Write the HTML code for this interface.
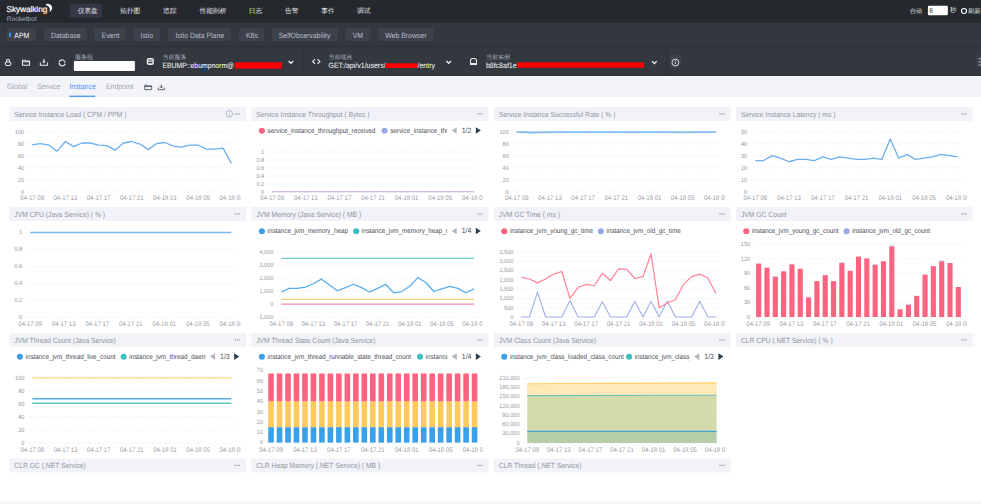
<!DOCTYPE html><html><head><meta charset="utf-8"><style>
html,body{margin:0;padding:0;width:981px;height:504px;overflow:hidden;background:#fff;}
body{font-family:"Liberation Sans", sans-serif;position:relative;}
.a{position:absolute;}
svg{position:absolute;left:0;top:0;}
svg text{font-family:"Liberation Sans", sans-serif;text-rendering:geometricPrecision;}
</style></head><body>
<svg width="981" height="504" viewBox="0 0 981 504">
<rect x="0" y="0" width="981" height="76" fill="#33383f"/>
<rect x="0" y="0" width="981" height="22.7" fill="#25292e"/>
<text x="6.50" y="9.40" font-size="8.3" fill="#ffffff" text-anchor="start" dominant-baseline="central" font-weight="normal" letter-spacing="-0.08" stroke="#fff" stroke-width="0.18">Skywalking</text>
<path d="M45.4 4.9 A4.1 4.1 0 1 1 49.3 11.9 A4.8 4.8 0 0 0 45.4 4.9 Z" fill="#fff"/>
<text x="6.80" y="19.30" font-size="6.6" fill="#a3b1c6" text-anchor="start" dominant-baseline="central" font-weight="normal" >Rocketbot</text>
<rect x="70" y="3.7" width="32" height="14" rx="1.5" fill="#343844"/>
<text x="77.70" y="11.20" font-size="6.7" fill="#e6e8ec" text-anchor="start" dominant-baseline="central" font-weight="normal" >仪表盘</text>
<circle cx="75.00" cy="10.9" r="0.7" fill="#3b3f46"/>
<text x="120.20" y="11.20" font-size="6.7" fill="#e6e8ec" text-anchor="start" dominant-baseline="central" font-weight="normal" >拓扑图</text>
<circle cx="117.50" cy="10.9" r="0.7" fill="#3b3f46"/>
<text x="163.00" y="11.20" font-size="6.7" fill="#e6e8ec" text-anchor="start" dominant-baseline="central" font-weight="normal" >追踪</text>
<circle cx="160.30" cy="10.9" r="0.7" fill="#3b3f46"/>
<text x="199.70" y="11.20" font-size="6.7" fill="#e6e8ec" text-anchor="start" dominant-baseline="central" font-weight="normal" >性能剖析</text>
<circle cx="197.00" cy="10.9" r="0.7" fill="#3b3f46"/>
<text x="248.70" y="11.20" font-size="6.7" fill="#e6e8ec" text-anchor="start" dominant-baseline="central" font-weight="normal" >日志</text>
<circle cx="246.00" cy="10.9" r="0.7" fill="#3b3f46"/>
<text x="285.00" y="11.20" font-size="6.7" fill="#e6e8ec" text-anchor="start" dominant-baseline="central" font-weight="normal" >告警</text>
<circle cx="282.30" cy="10.9" r="0.7" fill="#3b3f46"/>
<text x="321.30" y="11.20" font-size="6.7" fill="#e6e8ec" text-anchor="start" dominant-baseline="central" font-weight="normal" >事件</text>
<circle cx="318.60" cy="10.9" r="0.7" fill="#3b3f46"/>
<text x="357.00" y="11.20" font-size="6.7" fill="#e6e8ec" text-anchor="start" dominant-baseline="central" font-weight="normal" >调试</text>
<circle cx="354.30" cy="10.9" r="0.7" fill="#3b3f46"/>
<text x="910.00" y="11.60" font-size="6.1" fill="#e6e8ec" text-anchor="start" dominant-baseline="central" font-weight="normal" >自动</text>
<rect x="927.9" y="5.8" width="20" height="9.5" rx="1.2" fill="#ffffff"/>
<text transform="translate(929.30 10.60) scale(0.9 1)" font-size="7.556" fill="#333" text-anchor="start" dominant-baseline="central" font-weight="normal" >6</text>
<text x="950.00" y="10.90" font-size="6.4" fill="#e6e8ec" text-anchor="start" dominant-baseline="central" font-weight="normal" >秒</text>
<circle cx="964" cy="11" r="2.5" fill="none" stroke="#fff" stroke-width="1.1"/>
<text x="968.00" y="11.20" font-size="6.4" fill="#e0e3e8" text-anchor="start" dominant-baseline="central" font-weight="normal" >刷新</text>
<rect x="6.9" y="27.7" width="29.10" height="13.3" rx="1.5" fill="#3d414b"/>
<text transform="translate(14.30 35.30) scale(0.9 1)" font-size="7.667" fill="#ffffff" text-anchor="start" dominant-baseline="central" font-weight="normal" >APM</text>
<rect x="44" y="27.7" width="42.80" height="13.3" rx="1.5" fill="#3d414b"/>
<text transform="translate(51.00 35.30) scale(0.9 1)" font-size="7.667" fill="#b8bec8" text-anchor="start" dominant-baseline="central" font-weight="normal" >Database</text>
<rect x="94.4" y="27.7" width="31.20" height="13.3" rx="1.5" fill="#3d414b"/>
<text transform="translate(101.80 35.30) scale(0.9 1)" font-size="7.667" fill="#b8bec8" text-anchor="start" dominant-baseline="central" font-weight="normal" >Event</text>
<rect x="133.3" y="27.7" width="26.70" height="13.3" rx="1.5" fill="#3d414b"/>
<text transform="translate(140.50 35.30) scale(0.9 1)" font-size="7.667" fill="#b8bec8" text-anchor="start" dominant-baseline="central" font-weight="normal" >Istio</text>
<rect x="168" y="27.7" width="62.70" height="13.3" rx="1.5" fill="#3d414b"/>
<text transform="translate(175.40 35.30) scale(0.9 1)" font-size="7.667" fill="#b8bec8" text-anchor="start" dominant-baseline="central" font-weight="normal" >Istio Data Plane</text>
<rect x="239" y="27.7" width="24.90" height="13.3" rx="1.5" fill="#3d414b"/>
<text transform="translate(246.00 35.30) scale(0.9 1)" font-size="7.667" fill="#b8bec8" text-anchor="start" dominant-baseline="central" font-weight="normal" >K8s</text>
<rect x="271.6" y="27.7" width="66.30" height="13.3" rx="1.5" fill="#3d414b"/>
<text transform="translate(278.70 35.30) scale(0.9 1)" font-size="7.667" fill="#b8bec8" text-anchor="start" dominant-baseline="central" font-weight="normal" >SelfObservability</text>
<rect x="345.6" y="27.7" width="24.90" height="13.3" rx="1.5" fill="#3d414b"/>
<text transform="translate(352.70 35.30) scale(0.9 1)" font-size="7.667" fill="#b8bec8" text-anchor="start" dominant-baseline="central" font-weight="normal" >VM</text>
<rect x="378.2" y="27.7" width="55.10" height="13.3" rx="1.5" fill="#3d414b"/>
<text transform="translate(385.20 35.30) scale(0.9 1)" font-size="7.667" fill="#b8bec8" text-anchor="start" dominant-baseline="central" font-weight="normal" >Web Browser</text>
<rect x="9" y="32.6" width="1.9" height="4.6" rx="0.9" fill="#3a8ef6"/>
<rect x="0" y="46" width="981" height="0.8" fill="#2b2e35"/>
<path d="M6.6 62 V60.6 A1.45 1.45 0 0 1 9.5 60.6 V62" fill="none" stroke="#e8eaee" stroke-width="1.05"/>
<rect x="5.35" y="61.9" width="5.5" height="3.5" rx="1.3" fill="none" stroke="#e8eaee" stroke-width="1.05"/>
<rect x="16.3" y="57.2" width="0.8" height="8.9" fill="#2b2e35"/>
<path d="M22.5 60.2 h2.5 l0.9 0.9 h3.6 v4.2 h-7 z" fill="none" stroke="#e8eaee" stroke-width="1.05" stroke-linejoin="round"/>
<path d="M22.5 61.9 h7" stroke="#e8eaee" stroke-width="0.8"/>
<rect x="34.4" y="57.2" width="0.8" height="8.9" fill="#2b2e35"/>
<path d="M43.9 59 v3" fill="none" stroke="#e8eaee" stroke-width="1.1"/>
<path d="M42.1 61.6 h3.6 l-1.8 1.8 z" fill="#e8eaee"/>
<path d="M40.3 62.4 v2.8 h7.2 v-2.8" fill="none" stroke="#e8eaee" stroke-width="1.05"/>
<rect x="52.6" y="57.2" width="0.8" height="8.9" fill="#2b2e35"/>
<circle cx="62.1" cy="62.9" r="3.0" fill="none" stroke="#e8eaee" stroke-width="1.15" stroke-dasharray="8.2 1.22" transform="rotate(-165 62.1 62.9)"/>
<path d="M58.6 61.2 L60.2 60.4 L59.5 62.5 z M65.6 64.6 L64 65.4 L64.7 63.3 z" fill="#e8eaee"/>
<rect x="70.8" y="57.2" width="0.8" height="8.9" fill="#2b2e35"/>
<text x="75.00" y="57.60" font-size="6.0" fill="#a9afbb" text-anchor="start" dominant-baseline="central" font-weight="normal" >服务组</text>
<rect x="73.9" y="61.1" width="61" height="10" rx="1" fill="#ffffff"/>
<rect x="137.1" y="52" width="0.7" height="19.5" fill="#2b2e35"/>
<rect x="146.7" y="58" width="7.2" height="7.1" rx="2" fill="#e8eaee"/><rect x="148.1" y="59.2" width="4.4" height="2" rx="0.5" fill="#8f939b"/><rect x="148.2" y="61.9" width="4.2" height="1.3" fill="#33383f"/>
<text x="162.40" y="57.60" font-size="6.0" fill="#a9afbb" text-anchor="start" dominant-baseline="central" font-weight="normal" >当前服务</text>
<text transform="translate(162.40 65.20) scale(0.9 1)" font-size="7.611" fill="#ffffff" text-anchor="start" dominant-baseline="central" font-weight="normal" >EBUMP::ebumpnorm@</text>
<rect x="234.8" y="62.3" width="47" height="6.3" fill="#ff0000"/>
<path d="M288.60 61.10 l2.3 2.2 l2.3 -2.2" fill="none" stroke="#e8eaee" stroke-width="1.35"/>
<rect x="303.3" y="48.5" width="0.7" height="25.5" fill="#2b2e35"/>
<path d="M315 59.2 l-2.3 2.3 l2.3 2.3 M317.6 59.2 l2.3 2.3 l-2.3 2.3" fill="none" stroke="#e8eaee" stroke-width="1.1"/>
<text x="328.50" y="57.60" font-size="6.0" fill="#a9afbb" text-anchor="start" dominant-baseline="central" font-weight="normal" >当前端点</text>
<text transform="translate(328.50 65.30) scale(0.9 1)" font-size="7.778" fill="#ffffff" text-anchor="start" dominant-baseline="central" font-weight="normal" >GET:/api/v1/users/</text>
<rect x="385.6" y="63.3" width="31.9" height="4.6" fill="#ff0000"/>
<text transform="translate(417.50 65.30) scale(0.9 1)" font-size="7.778" fill="#ffffff" text-anchor="start" dominant-baseline="central" font-weight="normal" >/entry</text>
<path d="M446.40 61.10 l2.3 2.2 l2.3 -2.2" fill="none" stroke="#e8eaee" stroke-width="1.35"/>
<rect x="461.1" y="48.5" width="0.7" height="25.5" fill="#2b2e35"/>
<path d="M470.5 63 v-2.6 a1.9 1.9 0 0 1 1.9 -1.9 h2.2 a1.9 1.9 0 0 1 1.9 1.9 v2.6" fill="none" stroke="#e8eaee" stroke-width="1.05"/><rect x="470" y="62.9" width="7" height="2.2" rx="0.3" fill="#e8eaee"/><rect x="472.3" y="60.6" width="2.4" height="0.8" fill="#5a5e66"/>
<text x="485.90" y="57.60" font-size="6.0" fill="#a9afbb" text-anchor="start" dominant-baseline="central" font-weight="normal" >当前实例</text>
<text transform="translate(485.90 65.10) scale(0.9 1)" font-size="7.778" fill="#ffffff" text-anchor="start" dominant-baseline="central" font-weight="normal" >b8fc8af1e</text>
<rect x="517.2" y="62.4" width="126.7" height="5.3" fill="#ff0000"/>
<path d="M652.10 61.30 l2.3 2.2 l2.3 -2.2" fill="none" stroke="#e8eaee" stroke-width="1.35"/>
<rect x="666.6" y="48.5" width="0.7" height="25.5" fill="#2b2e35"/>
<rect x="669.9" y="54.8" width="11.1" height="13.2" rx="1.3" fill="#3d414b"/>
<circle cx="675.4" cy="62.5" r="3.4" fill="none" stroke="#e8eaee" stroke-width="0.9"/><path d="M675.4 61.6 v2.6" stroke="#e8eaee" stroke-width="0.9"/><circle cx="675.4" cy="60.3" r="0.5" fill="#e8eaee"/>
<rect x="976.3" y="55.2" width="8" height="12.5" rx="1.5" fill="#3d414b"/>
<path d="M978.7 58.8 h3 M980.2 62 h2 M978.7 65 h3" stroke="#c0c4cb" stroke-width="0.9"/>
<circle cx="979.4" cy="62" r="0.6" fill="#fff"/>
<rect x="0" y="75" width="981" height="1" fill="#2c3038"/>
<rect x="0" y="76" width="981" height="21" fill="#f3f4f9"/>
<rect x="0" y="76.6" width="981" height="1" fill="#f8f9fc"/>
<text transform="translate(7.00 86.90) scale(0.9 1)" font-size="7.778" fill="#a3a7b0" text-anchor="start" dominant-baseline="central" font-weight="normal" >Global</text>
<text transform="translate(37.20 86.90) scale(0.9 1)" font-size="7.778" fill="#a3a7b0" text-anchor="start" dominant-baseline="central" font-weight="normal" >Service</text>
<text transform="translate(69.40 86.90) scale(0.9 1)" font-size="7.778" fill="#4e8ff6" text-anchor="start" dominant-baseline="central" font-weight="normal" >Instance</text>
<text transform="translate(105.90 86.90) scale(0.9 1)" font-size="7.778" fill="#a3a7b0" text-anchor="start" dominant-baseline="central" font-weight="normal" >Endpoint</text>
<rect x="69.4" y="95.6" width="25.8" height="1.5" fill="#5b9cf7"/>
<path d="M144.8 85.1 h2.6 l0.8 0.9 h3.5 v3.6 h-6.9 z M144.8 86.5 h6.9" fill="none" stroke="#3e4350" stroke-width="0.8"/>
<path d="M161.3 84.5 v3.3 M159.8 86.3 l1.5 1.5 l1.5 -1.5 M158.2 87.6 v2.1 h6.2 v-2.1" fill="none" stroke="#3e4350" stroke-width="0.8"/>
<rect x="9.3" y="107.0" width="236.8" height="14.0" rx="1" fill="#f2f3f8"/>
<text transform="translate(14.30 114.30) scale(0.9 1)" font-size="7.500" fill="#8f95a1" text-anchor="start" dominant-baseline="central" font-weight="normal" >Service Instance Load ( CPM / PPM )</text>
<rect x="234.70" y="113.20" width="1.3" height="1.3" fill="#9da2ab"/>
<rect x="236.75" y="113.20" width="1.3" height="1.3" fill="#9da2ab"/>
<rect x="238.80" y="113.20" width="1.3" height="1.3" fill="#9da2ab"/>
<circle cx="229.30" cy="113.90" r="3.3" fill="none" stroke="#9aa0aa" stroke-width="0.7"/>
<path d="M229.30 113.50 v2.2" stroke="#9aa0aa" stroke-width="0.7"/>
<circle cx="229.30" cy="112.30" r="0.4" fill="#9aa0aa"/>
<line x1="28.00" y1="191.80" x2="235.50" y2="191.80" stroke="#edeff2" stroke-width="0.8" stroke-dasharray="1.7 1.3"/>
<text transform="translate(24.20 192.15) scale(0.9 1)" font-size="6.222" fill="#939aa4" text-anchor="end" dominant-baseline="central" font-weight="normal" >0</text>
<line x1="28.00" y1="179.78" x2="235.50" y2="179.78" stroke="#edeff2" stroke-width="0.8" stroke-dasharray="1.7 1.3"/>
<text transform="translate(24.20 180.13) scale(0.9 1)" font-size="6.222" fill="#939aa4" text-anchor="end" dominant-baseline="central" font-weight="normal" >20</text>
<line x1="28.00" y1="167.76" x2="235.50" y2="167.76" stroke="#edeff2" stroke-width="0.8" stroke-dasharray="1.7 1.3"/>
<text transform="translate(24.20 168.11) scale(0.9 1)" font-size="6.222" fill="#939aa4" text-anchor="end" dominant-baseline="central" font-weight="normal" >40</text>
<line x1="28.00" y1="155.74" x2="235.50" y2="155.74" stroke="#edeff2" stroke-width="0.8" stroke-dasharray="1.7 1.3"/>
<text transform="translate(24.20 156.09) scale(0.9 1)" font-size="6.222" fill="#939aa4" text-anchor="end" dominant-baseline="central" font-weight="normal" >60</text>
<line x1="28.00" y1="143.72" x2="235.50" y2="143.72" stroke="#edeff2" stroke-width="0.8" stroke-dasharray="1.7 1.3"/>
<text transform="translate(24.20 144.07) scale(0.9 1)" font-size="6.222" fill="#939aa4" text-anchor="end" dominant-baseline="central" font-weight="normal" >80</text>
<line x1="28.00" y1="131.70" x2="235.50" y2="131.70" stroke="#edeff2" stroke-width="0.8" stroke-dasharray="1.7 1.3"/>
<text transform="translate(24.20 132.05) scale(0.9 1)" font-size="6.222" fill="#939aa4" text-anchor="end" dominant-baseline="central" font-weight="normal" >100</text>
<clipPath id="c1"><rect x="9.3" y="192.7" width="231.30" height="12"/></clipPath>
<g clip-path="url(#c1)">
<text transform="translate(32.15 198.70) scale(0.9 1)" font-size="6.667" fill="#979ca6" text-anchor="middle" dominant-baseline="central" font-weight="normal" >04-17 09</text>
<text transform="translate(65.35 198.70) scale(0.9 1)" font-size="6.667" fill="#979ca6" text-anchor="middle" dominant-baseline="central" font-weight="normal" >04-17 13</text>
<text transform="translate(98.55 198.70) scale(0.9 1)" font-size="6.667" fill="#979ca6" text-anchor="middle" dominant-baseline="central" font-weight="normal" >04-17 17</text>
<text transform="translate(131.75 198.70) scale(0.9 1)" font-size="6.667" fill="#979ca6" text-anchor="middle" dominant-baseline="central" font-weight="normal" >04-17 21</text>
<text transform="translate(164.95 198.70) scale(0.9 1)" font-size="6.667" fill="#979ca6" text-anchor="middle" dominant-baseline="central" font-weight="normal" >04-18 01</text>
<text transform="translate(198.15 198.70) scale(0.9 1)" font-size="6.667" fill="#979ca6" text-anchor="middle" dominant-baseline="central" font-weight="normal" >04-18 05</text>
<text transform="translate(231.35 198.70) scale(0.9 1)" font-size="6.667" fill="#979ca6" text-anchor="middle" dominant-baseline="central" font-weight="normal" >04-18 09</text>
</g>
<line x1="32.15" y1="191.80" x2="32.15" y2="193.40" stroke="#e2e4ea" stroke-width="0.6"/>
<line x1="65.35" y1="191.80" x2="65.35" y2="193.40" stroke="#e2e4ea" stroke-width="0.6"/>
<line x1="98.55" y1="191.80" x2="98.55" y2="193.40" stroke="#e2e4ea" stroke-width="0.6"/>
<line x1="131.75" y1="191.80" x2="131.75" y2="193.40" stroke="#e2e4ea" stroke-width="0.6"/>
<line x1="164.95" y1="191.80" x2="164.95" y2="193.40" stroke="#e2e4ea" stroke-width="0.6"/>
<line x1="198.15" y1="191.80" x2="198.15" y2="193.40" stroke="#e2e4ea" stroke-width="0.6"/>
<line x1="231.35" y1="191.80" x2="231.35" y2="193.40" stroke="#e2e4ea" stroke-width="0.6"/>
<polyline points="32.15,144.80 40.45,143.54 48.75,145.04 57.05,151.17 65.35,141.50 73.65,146.60 81.95,143.00 90.25,143.00 98.55,145.04 106.85,145.58 115.15,150.15 123.45,143.00 131.75,141.50 140.05,144.02 148.35,149.61 156.65,143.54 164.95,142.52 173.25,146.06 181.55,147.09 189.85,145.04 198.15,145.04 206.45,149.13 214.75,149.13 223.05,148.11 231.35,163.37" fill="none" stroke="#6bafee" stroke-width="1.3" stroke-linejoin="round"/>
<rect x="251.2" y="107.0" width="237.4" height="14.0" rx="1" fill="#f2f3f8"/>
<text transform="translate(256.20 114.30) scale(0.9 1)" font-size="7.500" fill="#8f95a1" text-anchor="start" dominant-baseline="central" font-weight="normal" >Service Instance Throughput ( Bytes )</text>
<rect x="477.20" y="113.20" width="1.3" height="1.3" fill="#9da2ab"/>
<rect x="479.25" y="113.20" width="1.3" height="1.3" fill="#9da2ab"/>
<rect x="481.30" y="113.20" width="1.3" height="1.3" fill="#9da2ab"/>
<line x1="268.00" y1="191.80" x2="478.00" y2="191.80" stroke="#edeff2" stroke-width="0.8" stroke-dasharray="1.7 1.3"/>
<text transform="translate(264.20 192.15) scale(0.9 1)" font-size="6.222" fill="#939aa4" text-anchor="end" dominant-baseline="central" font-weight="normal" >0</text>
<line x1="268.00" y1="183.80" x2="478.00" y2="183.80" stroke="#edeff2" stroke-width="0.8" stroke-dasharray="1.7 1.3"/>
<text transform="translate(264.20 184.15) scale(0.9 1)" font-size="6.222" fill="#939aa4" text-anchor="end" dominant-baseline="central" font-weight="normal" >0.2</text>
<line x1="268.00" y1="175.80" x2="478.00" y2="175.80" stroke="#edeff2" stroke-width="0.8" stroke-dasharray="1.7 1.3"/>
<text transform="translate(264.20 176.15) scale(0.9 1)" font-size="6.222" fill="#939aa4" text-anchor="end" dominant-baseline="central" font-weight="normal" >0.4</text>
<line x1="268.00" y1="167.80" x2="478.00" y2="167.80" stroke="#edeff2" stroke-width="0.8" stroke-dasharray="1.7 1.3"/>
<text transform="translate(264.20 168.15) scale(0.9 1)" font-size="6.222" fill="#939aa4" text-anchor="end" dominant-baseline="central" font-weight="normal" >0.6</text>
<line x1="268.00" y1="159.80" x2="478.00" y2="159.80" stroke="#edeff2" stroke-width="0.8" stroke-dasharray="1.7 1.3"/>
<text transform="translate(264.20 160.15) scale(0.9 1)" font-size="6.222" fill="#939aa4" text-anchor="end" dominant-baseline="central" font-weight="normal" >0.8</text>
<line x1="268.00" y1="151.80" x2="478.00" y2="151.80" stroke="#edeff2" stroke-width="0.8" stroke-dasharray="1.7 1.3"/>
<text transform="translate(264.20 152.15) scale(0.9 1)" font-size="6.222" fill="#939aa4" text-anchor="end" dominant-baseline="central" font-weight="normal" >1</text>
<clipPath id="c2"><rect x="251.2" y="192.7" width="231.30" height="12"/></clipPath>
<g clip-path="url(#c2)">
<text transform="translate(272.20 198.70) scale(0.9 1)" font-size="6.667" fill="#979ca6" text-anchor="middle" dominant-baseline="central" font-weight="normal" >04-17 09</text>
<text transform="translate(305.80 198.70) scale(0.9 1)" font-size="6.667" fill="#979ca6" text-anchor="middle" dominant-baseline="central" font-weight="normal" >04-17 13</text>
<text transform="translate(339.40 198.70) scale(0.9 1)" font-size="6.667" fill="#979ca6" text-anchor="middle" dominant-baseline="central" font-weight="normal" >04-17 17</text>
<text transform="translate(373.00 198.70) scale(0.9 1)" font-size="6.667" fill="#979ca6" text-anchor="middle" dominant-baseline="central" font-weight="normal" >04-17 21</text>
<text transform="translate(406.60 198.70) scale(0.9 1)" font-size="6.667" fill="#979ca6" text-anchor="middle" dominant-baseline="central" font-weight="normal" >04-18 01</text>
<text transform="translate(440.20 198.70) scale(0.9 1)" font-size="6.667" fill="#979ca6" text-anchor="middle" dominant-baseline="central" font-weight="normal" >04-18 05</text>
<text transform="translate(473.80 198.70) scale(0.9 1)" font-size="6.667" fill="#979ca6" text-anchor="middle" dominant-baseline="central" font-weight="normal" >04-18 09</text>
</g>
<line x1="272.20" y1="191.80" x2="272.20" y2="193.40" stroke="#e2e4ea" stroke-width="0.6"/>
<line x1="305.80" y1="191.80" x2="305.80" y2="193.40" stroke="#e2e4ea" stroke-width="0.6"/>
<line x1="339.40" y1="191.80" x2="339.40" y2="193.40" stroke="#e2e4ea" stroke-width="0.6"/>
<line x1="373.00" y1="191.80" x2="373.00" y2="193.40" stroke="#e2e4ea" stroke-width="0.6"/>
<line x1="406.60" y1="191.80" x2="406.60" y2="193.40" stroke="#e2e4ea" stroke-width="0.6"/>
<line x1="440.20" y1="191.80" x2="440.20" y2="193.40" stroke="#e2e4ea" stroke-width="0.6"/>
<line x1="473.80" y1="191.80" x2="473.80" y2="193.40" stroke="#e2e4ea" stroke-width="0.6"/>
<polyline points="272.20,191.80 280.60,191.80 289.00,191.80 297.40,191.80 305.80,191.80 314.20,191.80 322.60,191.80 331.00,191.80 339.40,191.80 347.80,191.80 356.20,191.80 364.60,191.80 373.00,191.80 381.40,191.80 389.80,191.80 398.20,191.80 406.60,191.80 415.00,191.80 423.40,191.80 431.80,191.80 440.20,191.80 448.60,191.80 457.00,191.80 465.40,191.80 473.80,191.80" fill="none" stroke="#c8a6dc" stroke-width="1.1" stroke-linejoin="round"/>
<clipPath id="c3"><rect x="251.2" y="124.4" width="196.00" height="12"/></clipPath>
<g clip-path="url(#c3)">
<circle cx="261.90" cy="130.70" r="3.05" fill="#fb6381"/>
<text transform="translate(267.50 131.05) scale(0.9 1)" font-size="7.000" fill="#464c56" text-anchor="start" dominant-baseline="central" font-weight="normal" >service_instance_throughput_received</text>
<circle cx="384.60" cy="130.70" r="3.05" fill="#99a9e6"/>
<text transform="translate(390.20 131.05) scale(0.9 1)" font-size="7.000" fill="#464c56" text-anchor="start" dominant-baseline="central" font-weight="normal" >service_instance_throughput_sent</text>
</g>
<path d="M456.70 127.20 L451.70 130.50 L456.70 133.80 z" fill="#b0b5bd"/>
<text transform="translate(461.70 130.45) scale(0.9 1)" font-size="7.667" fill="#4a505a" text-anchor="start" dominant-baseline="central" font-weight="normal" >1/2</text>
<path d="M475.80 127.20 L480.80 130.50 L475.80 133.80 z" fill="#2b3e4e"/>
<rect x="493.8" y="107.0" width="236.9" height="14.0" rx="1" fill="#f2f3f8"/>
<text transform="translate(498.80 114.30) scale(0.9 1)" font-size="7.500" fill="#8f95a1" text-anchor="start" dominant-baseline="central" font-weight="normal" >Service Instance Successful Rate ( % )</text>
<rect x="719.30" y="113.20" width="1.3" height="1.3" fill="#9da2ab"/>
<rect x="721.35" y="113.20" width="1.3" height="1.3" fill="#9da2ab"/>
<rect x="723.40" y="113.20" width="1.3" height="1.3" fill="#9da2ab"/>
<line x1="512.60" y1="191.80" x2="720.00" y2="191.80" stroke="#edeff2" stroke-width="0.8" stroke-dasharray="1.7 1.3"/>
<text transform="translate(508.80 192.15) scale(0.9 1)" font-size="6.222" fill="#939aa4" text-anchor="end" dominant-baseline="central" font-weight="normal" >0</text>
<line x1="512.60" y1="179.78" x2="720.00" y2="179.78" stroke="#edeff2" stroke-width="0.8" stroke-dasharray="1.7 1.3"/>
<text transform="translate(508.80 180.13) scale(0.9 1)" font-size="6.222" fill="#939aa4" text-anchor="end" dominant-baseline="central" font-weight="normal" >20</text>
<line x1="512.60" y1="167.76" x2="720.00" y2="167.76" stroke="#edeff2" stroke-width="0.8" stroke-dasharray="1.7 1.3"/>
<text transform="translate(508.80 168.11) scale(0.9 1)" font-size="6.222" fill="#939aa4" text-anchor="end" dominant-baseline="central" font-weight="normal" >40</text>
<line x1="512.60" y1="155.74" x2="720.00" y2="155.74" stroke="#edeff2" stroke-width="0.8" stroke-dasharray="1.7 1.3"/>
<text transform="translate(508.80 156.09) scale(0.9 1)" font-size="6.222" fill="#939aa4" text-anchor="end" dominant-baseline="central" font-weight="normal" >60</text>
<line x1="512.60" y1="143.72" x2="720.00" y2="143.72" stroke="#edeff2" stroke-width="0.8" stroke-dasharray="1.7 1.3"/>
<text transform="translate(508.80 144.07) scale(0.9 1)" font-size="6.222" fill="#939aa4" text-anchor="end" dominant-baseline="central" font-weight="normal" >80</text>
<line x1="512.60" y1="131.70" x2="720.00" y2="131.70" stroke="#edeff2" stroke-width="0.8" stroke-dasharray="1.7 1.3"/>
<text transform="translate(508.80 132.05) scale(0.9 1)" font-size="6.222" fill="#939aa4" text-anchor="end" dominant-baseline="central" font-weight="normal" >100</text>
<clipPath id="c4"><rect x="493.8" y="192.7" width="231.30" height="12"/></clipPath>
<g clip-path="url(#c4)">
<text transform="translate(516.75 198.70) scale(0.9 1)" font-size="6.667" fill="#979ca6" text-anchor="middle" dominant-baseline="central" font-weight="normal" >04-17 09</text>
<text transform="translate(549.93 198.70) scale(0.9 1)" font-size="6.667" fill="#979ca6" text-anchor="middle" dominant-baseline="central" font-weight="normal" >04-17 13</text>
<text transform="translate(583.12 198.70) scale(0.9 1)" font-size="6.667" fill="#979ca6" text-anchor="middle" dominant-baseline="central" font-weight="normal" >04-17 17</text>
<text transform="translate(616.30 198.70) scale(0.9 1)" font-size="6.667" fill="#979ca6" text-anchor="middle" dominant-baseline="central" font-weight="normal" >04-17 21</text>
<text transform="translate(649.48 198.70) scale(0.9 1)" font-size="6.667" fill="#979ca6" text-anchor="middle" dominant-baseline="central" font-weight="normal" >04-18 01</text>
<text transform="translate(682.67 198.70) scale(0.9 1)" font-size="6.667" fill="#979ca6" text-anchor="middle" dominant-baseline="central" font-weight="normal" >04-18 05</text>
<text transform="translate(715.85 198.70) scale(0.9 1)" font-size="6.667" fill="#979ca6" text-anchor="middle" dominant-baseline="central" font-weight="normal" >04-18 09</text>
</g>
<line x1="516.75" y1="191.80" x2="516.75" y2="193.40" stroke="#e2e4ea" stroke-width="0.6"/>
<line x1="549.93" y1="191.80" x2="549.93" y2="193.40" stroke="#e2e4ea" stroke-width="0.6"/>
<line x1="583.12" y1="191.80" x2="583.12" y2="193.40" stroke="#e2e4ea" stroke-width="0.6"/>
<line x1="616.30" y1="191.80" x2="616.30" y2="193.40" stroke="#e2e4ea" stroke-width="0.6"/>
<line x1="649.48" y1="191.80" x2="649.48" y2="193.40" stroke="#e2e4ea" stroke-width="0.6"/>
<line x1="682.67" y1="191.80" x2="682.67" y2="193.40" stroke="#e2e4ea" stroke-width="0.6"/>
<line x1="715.85" y1="191.80" x2="715.85" y2="193.40" stroke="#e2e4ea" stroke-width="0.6"/>
<polyline points="516.75,132.12 525.04,132.24 533.34,132.48 541.64,132.36 549.93,132.24 558.23,132.18 566.52,132.18 574.82,132.18 583.12,132.18 591.41,132.12 599.71,132.18 608.00,132.18 616.30,132.12 624.60,132.18 632.89,132.24 641.19,132.18 649.48,132.12 657.78,132.18 666.08,132.18 674.37,132.24 682.67,132.30 690.96,132.24 699.26,132.18 707.56,132.12 715.85,132.12" fill="none" stroke="#84bcf0" stroke-width="1.8" stroke-linejoin="round"/>
<rect x="735.9" y="107.0" width="236.8" height="14.0" rx="1" fill="#f2f3f8"/>
<text transform="translate(740.90 114.30) scale(0.9 1)" font-size="7.500" fill="#8f95a1" text-anchor="start" dominant-baseline="central" font-weight="normal" >Service Instance Latency ( ms )</text>
<rect x="961.30" y="113.20" width="1.3" height="1.3" fill="#9da2ab"/>
<rect x="963.35" y="113.20" width="1.3" height="1.3" fill="#9da2ab"/>
<rect x="965.40" y="113.20" width="1.3" height="1.3" fill="#9da2ab"/>
<line x1="751.00" y1="191.80" x2="962.00" y2="191.80" stroke="#edeff2" stroke-width="0.8" stroke-dasharray="1.7 1.3"/>
<text transform="translate(747.20 192.15) scale(0.9 1)" font-size="6.222" fill="#939aa4" text-anchor="end" dominant-baseline="central" font-weight="normal" >0</text>
<line x1="751.00" y1="179.78" x2="962.00" y2="179.78" stroke="#edeff2" stroke-width="0.8" stroke-dasharray="1.7 1.3"/>
<text transform="translate(747.20 180.13) scale(0.9 1)" font-size="6.222" fill="#939aa4" text-anchor="end" dominant-baseline="central" font-weight="normal" >10</text>
<line x1="751.00" y1="167.76" x2="962.00" y2="167.76" stroke="#edeff2" stroke-width="0.8" stroke-dasharray="1.7 1.3"/>
<text transform="translate(747.20 168.11) scale(0.9 1)" font-size="6.222" fill="#939aa4" text-anchor="end" dominant-baseline="central" font-weight="normal" >20</text>
<line x1="751.00" y1="155.74" x2="962.00" y2="155.74" stroke="#edeff2" stroke-width="0.8" stroke-dasharray="1.7 1.3"/>
<text transform="translate(747.20 156.09) scale(0.9 1)" font-size="6.222" fill="#939aa4" text-anchor="end" dominant-baseline="central" font-weight="normal" >30</text>
<line x1="751.00" y1="143.72" x2="962.00" y2="143.72" stroke="#edeff2" stroke-width="0.8" stroke-dasharray="1.7 1.3"/>
<text transform="translate(747.20 144.07) scale(0.9 1)" font-size="6.222" fill="#939aa4" text-anchor="end" dominant-baseline="central" font-weight="normal" >40</text>
<line x1="751.00" y1="131.70" x2="962.00" y2="131.70" stroke="#edeff2" stroke-width="0.8" stroke-dasharray="1.7 1.3"/>
<text transform="translate(747.20 132.05) scale(0.9 1)" font-size="6.222" fill="#939aa4" text-anchor="end" dominant-baseline="central" font-weight="normal" >50</text>
<clipPath id="c5"><rect x="735.9" y="192.7" width="231.30" height="12"/></clipPath>
<g clip-path="url(#c5)">
<text transform="translate(755.22 198.70) scale(0.9 1)" font-size="6.667" fill="#979ca6" text-anchor="middle" dominant-baseline="central" font-weight="normal" >04-17 09</text>
<text transform="translate(788.98 198.70) scale(0.9 1)" font-size="6.667" fill="#979ca6" text-anchor="middle" dominant-baseline="central" font-weight="normal" >04-17 13</text>
<text transform="translate(822.74 198.70) scale(0.9 1)" font-size="6.667" fill="#979ca6" text-anchor="middle" dominant-baseline="central" font-weight="normal" >04-17 17</text>
<text transform="translate(856.50 198.70) scale(0.9 1)" font-size="6.667" fill="#979ca6" text-anchor="middle" dominant-baseline="central" font-weight="normal" >04-17 21</text>
<text transform="translate(890.26 198.70) scale(0.9 1)" font-size="6.667" fill="#979ca6" text-anchor="middle" dominant-baseline="central" font-weight="normal" >04-18 01</text>
<text transform="translate(924.02 198.70) scale(0.9 1)" font-size="6.667" fill="#979ca6" text-anchor="middle" dominant-baseline="central" font-weight="normal" >04-18 05</text>
<text transform="translate(957.78 198.70) scale(0.9 1)" font-size="6.667" fill="#979ca6" text-anchor="middle" dominant-baseline="central" font-weight="normal" >04-18 09</text>
</g>
<line x1="755.22" y1="191.80" x2="755.22" y2="193.40" stroke="#e2e4ea" stroke-width="0.6"/>
<line x1="788.98" y1="191.80" x2="788.98" y2="193.40" stroke="#e2e4ea" stroke-width="0.6"/>
<line x1="822.74" y1="191.80" x2="822.74" y2="193.40" stroke="#e2e4ea" stroke-width="0.6"/>
<line x1="856.50" y1="191.80" x2="856.50" y2="193.40" stroke="#e2e4ea" stroke-width="0.6"/>
<line x1="890.26" y1="191.80" x2="890.26" y2="193.40" stroke="#e2e4ea" stroke-width="0.6"/>
<line x1="924.02" y1="191.80" x2="924.02" y2="193.40" stroke="#e2e4ea" stroke-width="0.6"/>
<line x1="957.78" y1="191.80" x2="957.78" y2="193.40" stroke="#e2e4ea" stroke-width="0.6"/>
<polyline points="755.22,160.55 763.66,160.55 772.10,155.62 780.54,158.14 788.98,161.75 797.42,159.47 805.86,159.47 814.30,160.55 822.74,156.94 831.18,159.47 839.62,156.94 848.06,158.14 856.50,159.47 864.94,159.47 873.38,158.14 881.82,159.47 890.26,139.03 898.70,158.14 907.14,154.42 915.58,159.47 924.02,158.14 932.46,156.94 940.90,154.42 949.34,155.62 957.78,156.94" fill="none" stroke="#6bafee" stroke-width="1.3" stroke-linejoin="round"/>
<rect x="9.3" y="207.1" width="236.8" height="14.0" rx="1" fill="#f2f3f8"/>
<text transform="translate(14.30 214.40) scale(0.9 1)" font-size="7.500" fill="#8f95a1" text-anchor="start" dominant-baseline="central" font-weight="normal" >JVM CPU (Java Service) ( % )</text>
<rect x="234.70" y="213.30" width="1.3" height="1.3" fill="#9da2ab"/>
<rect x="236.75" y="213.30" width="1.3" height="1.3" fill="#9da2ab"/>
<rect x="238.80" y="213.30" width="1.3" height="1.3" fill="#9da2ab"/>
<line x1="26.00" y1="317.20" x2="235.50" y2="317.20" stroke="#edeff2" stroke-width="0.8" stroke-dasharray="1.7 1.3"/>
<text transform="translate(22.20 317.55) scale(0.9 1)" font-size="6.222" fill="#939aa4" text-anchor="end" dominant-baseline="central" font-weight="normal" >0</text>
<line x1="26.00" y1="300.26" x2="235.50" y2="300.26" stroke="#edeff2" stroke-width="0.8" stroke-dasharray="1.7 1.3"/>
<text transform="translate(22.20 300.61) scale(0.9 1)" font-size="6.222" fill="#939aa4" text-anchor="end" dominant-baseline="central" font-weight="normal" >0.2</text>
<line x1="26.00" y1="283.32" x2="235.50" y2="283.32" stroke="#edeff2" stroke-width="0.8" stroke-dasharray="1.7 1.3"/>
<text transform="translate(22.20 283.67) scale(0.9 1)" font-size="6.222" fill="#939aa4" text-anchor="end" dominant-baseline="central" font-weight="normal" >0.4</text>
<line x1="26.00" y1="266.38" x2="235.50" y2="266.38" stroke="#edeff2" stroke-width="0.8" stroke-dasharray="1.7 1.3"/>
<text transform="translate(22.20 266.73) scale(0.9 1)" font-size="6.222" fill="#939aa4" text-anchor="end" dominant-baseline="central" font-weight="normal" >0.6</text>
<line x1="26.00" y1="249.44" x2="235.50" y2="249.44" stroke="#edeff2" stroke-width="0.8" stroke-dasharray="1.7 1.3"/>
<text transform="translate(22.20 249.79) scale(0.9 1)" font-size="6.222" fill="#939aa4" text-anchor="end" dominant-baseline="central" font-weight="normal" >0.8</text>
<line x1="26.00" y1="232.50" x2="235.50" y2="232.50" stroke="#edeff2" stroke-width="0.8" stroke-dasharray="1.7 1.3"/>
<text transform="translate(22.20 232.85) scale(0.9 1)" font-size="6.222" fill="#939aa4" text-anchor="end" dominant-baseline="central" font-weight="normal" >1</text>
<clipPath id="c6"><rect x="9.3" y="318.3" width="231.30" height="12"/></clipPath>
<g clip-path="url(#c6)">
<text transform="translate(30.19 324.30) scale(0.9 1)" font-size="6.667" fill="#979ca6" text-anchor="middle" dominant-baseline="central" font-weight="normal" >04-17 09</text>
<text transform="translate(63.71 324.30) scale(0.9 1)" font-size="6.667" fill="#979ca6" text-anchor="middle" dominant-baseline="central" font-weight="normal" >04-17 13</text>
<text transform="translate(97.23 324.30) scale(0.9 1)" font-size="6.667" fill="#979ca6" text-anchor="middle" dominant-baseline="central" font-weight="normal" >04-17 17</text>
<text transform="translate(130.75 324.30) scale(0.9 1)" font-size="6.667" fill="#979ca6" text-anchor="middle" dominant-baseline="central" font-weight="normal" >04-17 21</text>
<text transform="translate(164.27 324.30) scale(0.9 1)" font-size="6.667" fill="#979ca6" text-anchor="middle" dominant-baseline="central" font-weight="normal" >04-18 01</text>
<text transform="translate(197.79 324.30) scale(0.9 1)" font-size="6.667" fill="#979ca6" text-anchor="middle" dominant-baseline="central" font-weight="normal" >04-18 05</text>
<text transform="translate(231.31 324.30) scale(0.9 1)" font-size="6.667" fill="#979ca6" text-anchor="middle" dominant-baseline="central" font-weight="normal" >04-18 09</text>
</g>
<line x1="30.19" y1="317.20" x2="30.19" y2="318.80" stroke="#e2e4ea" stroke-width="0.6"/>
<line x1="63.71" y1="317.20" x2="63.71" y2="318.80" stroke="#e2e4ea" stroke-width="0.6"/>
<line x1="97.23" y1="317.20" x2="97.23" y2="318.80" stroke="#e2e4ea" stroke-width="0.6"/>
<line x1="130.75" y1="317.20" x2="130.75" y2="318.80" stroke="#e2e4ea" stroke-width="0.6"/>
<line x1="164.27" y1="317.20" x2="164.27" y2="318.80" stroke="#e2e4ea" stroke-width="0.6"/>
<line x1="197.79" y1="317.20" x2="197.79" y2="318.80" stroke="#e2e4ea" stroke-width="0.6"/>
<line x1="231.31" y1="317.20" x2="231.31" y2="318.80" stroke="#e2e4ea" stroke-width="0.6"/>
<polyline points="30.19,232.50 38.57,232.50 46.95,232.50 55.33,232.50 63.71,232.50 72.09,232.50 80.47,232.50 88.85,232.50 97.23,232.50 105.61,232.50 113.99,232.50 122.37,232.50 130.75,232.50 139.13,232.50 147.51,232.50 155.89,232.50 164.27,232.50 172.65,232.50 181.03,232.50 189.41,232.50 197.79,232.50 206.17,232.50 214.55,232.50 222.93,232.50 231.31,232.50" fill="none" stroke="#80b9ef" stroke-width="1.3" stroke-linejoin="round"/>
<rect x="251.2" y="207.1" width="237.4" height="14.0" rx="1" fill="#f2f3f8"/>
<text transform="translate(256.20 214.40) scale(0.9 1)" font-size="7.500" fill="#8f95a1" text-anchor="start" dominant-baseline="central" font-weight="normal" >JVM Memory (Java Service) ( MB )</text>
<rect x="477.20" y="213.30" width="1.3" height="1.3" fill="#9da2ab"/>
<rect x="479.25" y="213.30" width="1.3" height="1.3" fill="#9da2ab"/>
<rect x="481.30" y="213.30" width="1.3" height="1.3" fill="#9da2ab"/>
<line x1="277.20" y1="317.10" x2="478.00" y2="317.10" stroke="#edeff2" stroke-width="0.8" stroke-dasharray="1.7 1.3"/>
<text transform="translate(273.40 317.45) scale(0.9 1)" font-size="6.222" fill="#939aa4" text-anchor="end" dominant-baseline="central" font-weight="normal" >-1,000</text>
<line x1="277.20" y1="304.10" x2="478.00" y2="304.10" stroke="#edeff2" stroke-width="0.8" stroke-dasharray="1.7 1.3"/>
<text transform="translate(273.40 304.45) scale(0.9 1)" font-size="6.222" fill="#939aa4" text-anchor="end" dominant-baseline="central" font-weight="normal" >0</text>
<line x1="277.20" y1="291.10" x2="478.00" y2="291.10" stroke="#edeff2" stroke-width="0.8" stroke-dasharray="1.7 1.3"/>
<text transform="translate(273.40 291.45) scale(0.9 1)" font-size="6.222" fill="#939aa4" text-anchor="end" dominant-baseline="central" font-weight="normal" >1,000</text>
<line x1="277.20" y1="278.10" x2="478.00" y2="278.10" stroke="#edeff2" stroke-width="0.8" stroke-dasharray="1.7 1.3"/>
<text transform="translate(273.40 278.45) scale(0.9 1)" font-size="6.222" fill="#939aa4" text-anchor="end" dominant-baseline="central" font-weight="normal" >2,000</text>
<line x1="277.20" y1="265.10" x2="478.00" y2="265.10" stroke="#edeff2" stroke-width="0.8" stroke-dasharray="1.7 1.3"/>
<text transform="translate(273.40 265.45) scale(0.9 1)" font-size="6.222" fill="#939aa4" text-anchor="end" dominant-baseline="central" font-weight="normal" >3,000</text>
<line x1="277.20" y1="252.10" x2="478.00" y2="252.10" stroke="#edeff2" stroke-width="0.8" stroke-dasharray="1.7 1.3"/>
<text transform="translate(273.40 252.45) scale(0.9 1)" font-size="6.222" fill="#939aa4" text-anchor="end" dominant-baseline="central" font-weight="normal" >4,000</text>
<clipPath id="c7"><rect x="251.2" y="318.3" width="231.30" height="12"/></clipPath>
<g clip-path="url(#c7)">
<text transform="translate(281.22 324.30) scale(0.9 1)" font-size="6.667" fill="#979ca6" text-anchor="middle" dominant-baseline="central" font-weight="normal" >04-17 09</text>
<text transform="translate(313.34 324.30) scale(0.9 1)" font-size="6.667" fill="#979ca6" text-anchor="middle" dominant-baseline="central" font-weight="normal" >04-17 13</text>
<text transform="translate(345.47 324.30) scale(0.9 1)" font-size="6.667" fill="#979ca6" text-anchor="middle" dominant-baseline="central" font-weight="normal" >04-17 17</text>
<text transform="translate(377.60 324.30) scale(0.9 1)" font-size="6.667" fill="#979ca6" text-anchor="middle" dominant-baseline="central" font-weight="normal" >04-17 21</text>
<text transform="translate(409.73 324.30) scale(0.9 1)" font-size="6.667" fill="#979ca6" text-anchor="middle" dominant-baseline="central" font-weight="normal" >04-18 01</text>
<text transform="translate(441.86 324.30) scale(0.9 1)" font-size="6.667" fill="#979ca6" text-anchor="middle" dominant-baseline="central" font-weight="normal" >04-18 05</text>
<text transform="translate(473.98 324.30) scale(0.9 1)" font-size="6.667" fill="#979ca6" text-anchor="middle" dominant-baseline="central" font-weight="normal" >04-18 09</text>
</g>
<line x1="281.22" y1="317.10" x2="281.22" y2="318.70" stroke="#e2e4ea" stroke-width="0.6"/>
<line x1="313.34" y1="317.10" x2="313.34" y2="318.70" stroke="#e2e4ea" stroke-width="0.6"/>
<line x1="345.47" y1="317.10" x2="345.47" y2="318.70" stroke="#e2e4ea" stroke-width="0.6"/>
<line x1="377.60" y1="317.10" x2="377.60" y2="318.70" stroke="#e2e4ea" stroke-width="0.6"/>
<line x1="409.73" y1="317.10" x2="409.73" y2="318.70" stroke="#e2e4ea" stroke-width="0.6"/>
<line x1="441.86" y1="317.10" x2="441.86" y2="318.70" stroke="#e2e4ea" stroke-width="0.6"/>
<line x1="473.98" y1="317.10" x2="473.98" y2="318.70" stroke="#e2e4ea" stroke-width="0.6"/>
<polyline points="281.22,304.10 289.25,304.10 297.28,304.10 305.31,304.10 313.34,304.10 321.38,304.10 329.41,304.10 337.44,304.10 345.47,304.10 353.50,304.10 361.54,304.10 369.57,304.10 377.60,304.10 385.63,304.10 393.66,304.10 401.70,304.10 409.73,304.10 417.76,304.10 425.79,304.10 433.82,304.10 441.86,304.10 449.89,304.10 457.92,304.10 465.95,304.10 473.98,304.10" fill="none" stroke="#ff8a9e" stroke-width="1.2" stroke-linejoin="round"/>
<polyline points="281.22,299.29 289.25,299.29 297.28,299.29 305.31,299.29 313.34,299.29 321.38,299.29 329.41,299.29 337.44,299.29 345.47,299.29 353.50,299.29 361.54,299.29 369.57,299.29 377.60,299.29 385.63,299.29 393.66,299.29 401.70,299.29 409.73,299.29 417.76,299.29 425.79,299.29 433.82,299.29 441.86,299.29 449.89,299.29 457.92,299.29 465.95,299.29 473.98,299.29" fill="none" stroke="#ffd47e" stroke-width="1.2" stroke-linejoin="round"/>
<polyline points="281.22,258.40 289.25,258.40 297.28,258.40 305.31,258.40 313.34,258.40 321.38,258.40 329.41,258.40 337.44,258.40 345.47,258.40 353.50,258.40 361.54,258.40 369.57,258.40 377.60,258.40 385.63,258.40 393.66,258.40 401.70,258.40 409.73,258.40 417.76,258.40 425.79,258.40 433.82,258.40 441.86,258.40 449.89,258.40 457.92,258.40 465.95,258.40 473.98,258.40" fill="none" stroke="#72cccb" stroke-width="1.2" stroke-linejoin="round"/>
<polyline points="281.22,292.04 289.25,288.41 297.28,288.41 305.31,287.12 313.34,283.75 321.38,279.11 329.41,285.06 337.44,290.74 345.47,287.64 353.50,284.27 361.54,287.64 369.57,292.04 377.60,288.41 385.63,284.27 393.66,292.80 401.70,291.52 409.73,286.34 417.76,277.57 425.79,282.47 433.82,291.52 441.86,288.93 449.89,286.34 457.92,288.41 465.95,292.80 473.98,288.93" fill="none" stroke="#55adee" stroke-width="1.25" stroke-linejoin="round"/>
<clipPath id="c8"><rect x="251.2" y="224.9" width="196.00" height="12"/></clipPath>
<g clip-path="url(#c8)">
<circle cx="261.90" cy="231.20" r="3.05" fill="#3aa0ea"/>
<text transform="translate(267.50 231.55) scale(0.9 1)" font-size="7.000" fill="#464c56" text-anchor="start" dominant-baseline="central" font-weight="normal" >instance_jvm_memory_heap</text>
<circle cx="356.20" cy="231.20" r="3.05" fill="#3cbfbd"/>
<text transform="translate(361.80 231.55) scale(0.9 1)" font-size="7.000" fill="#464c56" text-anchor="start" dominant-baseline="central" font-weight="normal" >instance_jvm_memory_heap_max</text>
</g>
<path d="M456.70 227.70 L451.70 231.00 L456.70 234.30 z" fill="#b0b5bd"/>
<text transform="translate(461.70 230.95) scale(0.9 1)" font-size="7.667" fill="#4a505a" text-anchor="start" dominant-baseline="central" font-weight="normal" >1/4</text>
<path d="M475.80 227.70 L480.80 231.00 L475.80 234.30 z" fill="#2b3e4e"/>
<rect x="493.8" y="207.1" width="236.9" height="14.0" rx="1" fill="#f2f3f8"/>
<text transform="translate(498.80 214.40) scale(0.9 1)" font-size="7.500" fill="#8f95a1" text-anchor="start" dominant-baseline="central" font-weight="normal" >JVM GC Time ( ms )</text>
<rect x="719.30" y="213.30" width="1.3" height="1.3" fill="#9da2ab"/>
<rect x="721.35" y="213.30" width="1.3" height="1.3" fill="#9da2ab"/>
<rect x="723.40" y="213.30" width="1.3" height="1.3" fill="#9da2ab"/>
<line x1="517.20" y1="317.00" x2="720.00" y2="317.00" stroke="#edeff2" stroke-width="0.8" stroke-dasharray="1.7 1.3"/>
<text transform="translate(513.40 317.35) scale(0.9 1)" font-size="6.222" fill="#939aa4" text-anchor="end" dominant-baseline="central" font-weight="normal" >0</text>
<line x1="517.20" y1="307.73" x2="720.00" y2="307.73" stroke="#edeff2" stroke-width="0.8" stroke-dasharray="1.7 1.3"/>
<text transform="translate(513.40 308.08) scale(0.9 1)" font-size="6.222" fill="#939aa4" text-anchor="end" dominant-baseline="central" font-weight="normal" >500</text>
<line x1="517.20" y1="298.46" x2="720.00" y2="298.46" stroke="#edeff2" stroke-width="0.8" stroke-dasharray="1.7 1.3"/>
<text transform="translate(513.40 298.81) scale(0.9 1)" font-size="6.222" fill="#939aa4" text-anchor="end" dominant-baseline="central" font-weight="normal" >1,000</text>
<line x1="517.20" y1="289.19" x2="720.00" y2="289.19" stroke="#edeff2" stroke-width="0.8" stroke-dasharray="1.7 1.3"/>
<text transform="translate(513.40 289.54) scale(0.9 1)" font-size="6.222" fill="#939aa4" text-anchor="end" dominant-baseline="central" font-weight="normal" >1,500</text>
<line x1="517.20" y1="279.91" x2="720.00" y2="279.91" stroke="#edeff2" stroke-width="0.8" stroke-dasharray="1.7 1.3"/>
<text transform="translate(513.40 280.26) scale(0.9 1)" font-size="6.222" fill="#939aa4" text-anchor="end" dominant-baseline="central" font-weight="normal" >2,000</text>
<line x1="517.20" y1="270.64" x2="720.00" y2="270.64" stroke="#edeff2" stroke-width="0.8" stroke-dasharray="1.7 1.3"/>
<text transform="translate(513.40 270.99) scale(0.9 1)" font-size="6.222" fill="#939aa4" text-anchor="end" dominant-baseline="central" font-weight="normal" >2,500</text>
<line x1="517.20" y1="261.37" x2="720.00" y2="261.37" stroke="#edeff2" stroke-width="0.8" stroke-dasharray="1.7 1.3"/>
<text transform="translate(513.40 261.72) scale(0.9 1)" font-size="6.222" fill="#939aa4" text-anchor="end" dominant-baseline="central" font-weight="normal" >3,000</text>
<line x1="517.20" y1="252.10" x2="720.00" y2="252.10" stroke="#edeff2" stroke-width="0.8" stroke-dasharray="1.7 1.3"/>
<text transform="translate(513.40 252.45) scale(0.9 1)" font-size="6.222" fill="#939aa4" text-anchor="end" dominant-baseline="central" font-weight="normal" >3,500</text>
<clipPath id="c9"><rect x="493.8" y="318.3" width="231.30" height="12"/></clipPath>
<g clip-path="url(#c9)">
<text transform="translate(521.26 324.30) scale(0.9 1)" font-size="6.667" fill="#979ca6" text-anchor="middle" dominant-baseline="central" font-weight="normal" >04-17 09</text>
<text transform="translate(553.70 324.30) scale(0.9 1)" font-size="6.667" fill="#979ca6" text-anchor="middle" dominant-baseline="central" font-weight="normal" >04-17 13</text>
<text transform="translate(586.15 324.30) scale(0.9 1)" font-size="6.667" fill="#979ca6" text-anchor="middle" dominant-baseline="central" font-weight="normal" >04-17 17</text>
<text transform="translate(618.60 324.30) scale(0.9 1)" font-size="6.667" fill="#979ca6" text-anchor="middle" dominant-baseline="central" font-weight="normal" >04-17 21</text>
<text transform="translate(651.05 324.30) scale(0.9 1)" font-size="6.667" fill="#979ca6" text-anchor="middle" dominant-baseline="central" font-weight="normal" >04-18 01</text>
<text transform="translate(683.50 324.30) scale(0.9 1)" font-size="6.667" fill="#979ca6" text-anchor="middle" dominant-baseline="central" font-weight="normal" >04-18 05</text>
<text transform="translate(715.94 324.30) scale(0.9 1)" font-size="6.667" fill="#979ca6" text-anchor="middle" dominant-baseline="central" font-weight="normal" >04-18 09</text>
</g>
<line x1="521.26" y1="317.00" x2="521.26" y2="318.60" stroke="#e2e4ea" stroke-width="0.6"/>
<line x1="553.70" y1="317.00" x2="553.70" y2="318.60" stroke="#e2e4ea" stroke-width="0.6"/>
<line x1="586.15" y1="317.00" x2="586.15" y2="318.60" stroke="#e2e4ea" stroke-width="0.6"/>
<line x1="618.60" y1="317.00" x2="618.60" y2="318.60" stroke="#e2e4ea" stroke-width="0.6"/>
<line x1="651.05" y1="317.00" x2="651.05" y2="318.60" stroke="#e2e4ea" stroke-width="0.6"/>
<line x1="683.50" y1="317.00" x2="683.50" y2="318.60" stroke="#e2e4ea" stroke-width="0.6"/>
<line x1="715.94" y1="317.00" x2="715.94" y2="318.60" stroke="#e2e4ea" stroke-width="0.6"/>
<polyline points="521.26,317.00 529.37,317.00 537.48,292.19 545.59,317.00 553.70,317.00 561.82,317.00 569.93,300.46 578.04,317.00 586.15,317.00 594.26,317.00 602.38,301.76 610.49,317.00 618.60,317.00 626.71,317.00 634.82,301.24 642.94,317.00 651.05,301.24 659.16,317.00 667.27,300.98 675.38,317.00 683.50,317.00 691.61,317.00 699.72,301.24 707.83,317.00 715.94,317.00" fill="none" stroke="#a3b0ea" stroke-width="1.15" stroke-linejoin="round"/>
<polyline points="521.26,277.19 529.37,279.01 537.48,282.88 545.59,279.01 553.70,274.09 561.82,271.51 569.93,298.38 578.04,287.54 586.15,284.42 594.26,285.72 602.38,273.31 610.49,280.54 618.60,268.92 626.71,269.44 634.82,278.49 642.94,276.67 651.05,253.94 659.16,307.69 667.27,303.04 675.38,299.68 683.50,284.42 691.61,276.67 699.72,274.09 707.83,277.97 715.94,293.47" fill="none" stroke="#ff8197" stroke-width="1.2" stroke-linejoin="round"/>
<circle cx="504.30" cy="231.20" r="3.05" fill="#fb6381"/>
<text transform="translate(509.90 231.55) scale(0.9 1)" font-size="7.000" fill="#464c56" text-anchor="start" dominant-baseline="central" font-weight="normal" >instance_jvm_young_gc_time</text>
<circle cx="600.90" cy="231.20" r="3.05" fill="#99a9e6"/>
<text transform="translate(606.50 231.55) scale(0.9 1)" font-size="7.000" fill="#464c56" text-anchor="start" dominant-baseline="central" font-weight="normal" >instance_jvm_old_gc_time</text>
<rect x="735.9" y="207.1" width="236.8" height="14.0" rx="1" fill="#f2f3f8"/>
<text transform="translate(740.90 214.40) scale(0.9 1)" font-size="7.500" fill="#8f95a1" text-anchor="start" dominant-baseline="central" font-weight="normal" >JVM GC Count</text>
<rect x="961.30" y="213.30" width="1.3" height="1.3" fill="#9da2ab"/>
<rect x="963.35" y="213.30" width="1.3" height="1.3" fill="#9da2ab"/>
<rect x="965.40" y="213.30" width="1.3" height="1.3" fill="#9da2ab"/>
<line x1="754.00" y1="317.00" x2="962.00" y2="317.00" stroke="#edeff2" stroke-width="0.8" stroke-dasharray="1.7 1.3"/>
<text transform="translate(750.20 317.35) scale(0.9 1)" font-size="6.222" fill="#939aa4" text-anchor="end" dominant-baseline="central" font-weight="normal" >0</text>
<line x1="754.00" y1="302.48" x2="962.00" y2="302.48" stroke="#edeff2" stroke-width="0.8" stroke-dasharray="1.7 1.3"/>
<text transform="translate(750.20 302.83) scale(0.9 1)" font-size="6.222" fill="#939aa4" text-anchor="end" dominant-baseline="central" font-weight="normal" >30</text>
<line x1="754.00" y1="287.96" x2="962.00" y2="287.96" stroke="#edeff2" stroke-width="0.8" stroke-dasharray="1.7 1.3"/>
<text transform="translate(750.20 288.31) scale(0.9 1)" font-size="6.222" fill="#939aa4" text-anchor="end" dominant-baseline="central" font-weight="normal" >60</text>
<line x1="754.00" y1="273.44" x2="962.00" y2="273.44" stroke="#edeff2" stroke-width="0.8" stroke-dasharray="1.7 1.3"/>
<text transform="translate(750.20 273.79) scale(0.9 1)" font-size="6.222" fill="#939aa4" text-anchor="end" dominant-baseline="central" font-weight="normal" >90</text>
<line x1="754.00" y1="258.92" x2="962.00" y2="258.92" stroke="#edeff2" stroke-width="0.8" stroke-dasharray="1.7 1.3"/>
<text transform="translate(750.20 259.27) scale(0.9 1)" font-size="6.222" fill="#939aa4" text-anchor="end" dominant-baseline="central" font-weight="normal" >120</text>
<line x1="754.00" y1="244.40" x2="962.00" y2="244.40" stroke="#edeff2" stroke-width="0.8" stroke-dasharray="1.7 1.3"/>
<text transform="translate(750.20 244.75) scale(0.9 1)" font-size="6.222" fill="#939aa4" text-anchor="end" dominant-baseline="central" font-weight="normal" >150</text>
<clipPath id="c10"><rect x="735.9" y="318.3" width="231.30" height="12"/></clipPath>
<g clip-path="url(#c10)">
<text transform="translate(758.16 324.30) scale(0.9 1)" font-size="6.667" fill="#979ca6" text-anchor="middle" dominant-baseline="central" font-weight="normal" >04-17 09</text>
<text transform="translate(791.44 324.30) scale(0.9 1)" font-size="6.667" fill="#979ca6" text-anchor="middle" dominant-baseline="central" font-weight="normal" >04-17 13</text>
<text transform="translate(824.72 324.30) scale(0.9 1)" font-size="6.667" fill="#979ca6" text-anchor="middle" dominant-baseline="central" font-weight="normal" >04-17 17</text>
<text transform="translate(858.00 324.30) scale(0.9 1)" font-size="6.667" fill="#979ca6" text-anchor="middle" dominant-baseline="central" font-weight="normal" >04-17 21</text>
<text transform="translate(891.28 324.30) scale(0.9 1)" font-size="6.667" fill="#979ca6" text-anchor="middle" dominant-baseline="central" font-weight="normal" >04-18 01</text>
<text transform="translate(924.56 324.30) scale(0.9 1)" font-size="6.667" fill="#979ca6" text-anchor="middle" dominant-baseline="central" font-weight="normal" >04-18 05</text>
<text transform="translate(957.84 324.30) scale(0.9 1)" font-size="6.667" fill="#979ca6" text-anchor="middle" dominant-baseline="central" font-weight="normal" >04-18 09</text>
</g>
<line x1="758.16" y1="317.00" x2="758.16" y2="318.60" stroke="#e2e4ea" stroke-width="0.6"/>
<line x1="791.44" y1="317.00" x2="791.44" y2="318.60" stroke="#e2e4ea" stroke-width="0.6"/>
<line x1="824.72" y1="317.00" x2="824.72" y2="318.60" stroke="#e2e4ea" stroke-width="0.6"/>
<line x1="858.00" y1="317.00" x2="858.00" y2="318.60" stroke="#e2e4ea" stroke-width="0.6"/>
<line x1="891.28" y1="317.00" x2="891.28" y2="318.60" stroke="#e2e4ea" stroke-width="0.6"/>
<line x1="924.56" y1="317.00" x2="924.56" y2="318.60" stroke="#e2e4ea" stroke-width="0.6"/>
<line x1="957.84" y1="317.00" x2="957.84" y2="318.60" stroke="#e2e4ea" stroke-width="0.6"/>
<rect x="756.11" y="263.57" width="5.1" height="53.43" fill="#fb6381"/>
<rect x="764.43" y="267.68" width="5.1" height="49.32" fill="#fb6381"/>
<rect x="772.75" y="276.73" width="5.1" height="40.27" fill="#fb6381"/>
<rect x="772.75" y="276.03" width="5.1" height="0.7" fill="#b8c2ee"/>
<rect x="781.07" y="271.31" width="5.1" height="45.69" fill="#fb6381"/>
<rect x="789.39" y="264.34" width="5.1" height="52.66" fill="#fb6381"/>
<rect x="797.71" y="268.75" width="5.1" height="48.25" fill="#fb6381"/>
<rect x="806.03" y="297.40" width="5.1" height="19.60" fill="#fb6381"/>
<rect x="806.03" y="296.70" width="5.1" height="0.7" fill="#b8c2ee"/>
<rect x="814.35" y="281.14" width="5.1" height="35.86" fill="#fb6381"/>
<rect x="822.67" y="275.18" width="5.1" height="41.82" fill="#fb6381"/>
<rect x="830.99" y="281.14" width="5.1" height="35.86" fill="#fb6381"/>
<rect x="839.31" y="263.03" width="5.1" height="53.97" fill="#fb6381"/>
<rect x="839.31" y="262.33" width="5.1" height="0.7" fill="#b8c2ee"/>
<rect x="847.63" y="270.78" width="5.1" height="46.22" fill="#fb6381"/>
<rect x="855.95" y="256.60" width="5.1" height="60.40" fill="#fb6381"/>
<rect x="864.27" y="258.39" width="5.1" height="58.61" fill="#fb6381"/>
<rect x="872.59" y="264.87" width="5.1" height="52.13" fill="#fb6381"/>
<rect x="872.59" y="264.17" width="5.1" height="0.7" fill="#b8c2ee"/>
<rect x="880.91" y="261.24" width="5.1" height="55.76" fill="#fb6381"/>
<rect x="889.23" y="246.29" width="5.1" height="70.71" fill="#fb6381"/>
<rect x="889.23" y="245.59" width="5.1" height="0.7" fill="#b8c2ee"/>
<rect x="897.55" y="309.26" width="5.1" height="7.74" fill="#fb6381"/>
<rect x="905.87" y="304.90" width="5.1" height="12.10" fill="#fb6381"/>
<rect x="905.87" y="304.20" width="5.1" height="0.7" fill="#b8c2ee"/>
<rect x="914.19" y="295.85" width="5.1" height="21.15" fill="#fb6381"/>
<rect x="922.51" y="274.65" width="5.1" height="42.35" fill="#fb6381"/>
<rect x="930.83" y="266.18" width="5.1" height="50.82" fill="#fb6381"/>
<rect x="939.15" y="261.24" width="5.1" height="55.76" fill="#fb6381"/>
<rect x="939.15" y="260.54" width="5.1" height="0.7" fill="#b8c2ee"/>
<rect x="947.47" y="263.03" width="5.1" height="53.97" fill="#fb6381"/>
<rect x="955.79" y="287.04" width="5.1" height="29.96" fill="#fb6381"/>
<circle cx="746.30" cy="231.20" r="3.05" fill="#fb6381"/>
<text transform="translate(751.90 231.55) scale(0.9 1)" font-size="7.000" fill="#464c56" text-anchor="start" dominant-baseline="central" font-weight="normal" >instance_jvm_young_gc_count</text>
<circle cx="846.60" cy="231.20" r="3.05" fill="#99a9e6"/>
<text transform="translate(852.20 231.55) scale(0.9 1)" font-size="7.000" fill="#464c56" text-anchor="start" dominant-baseline="central" font-weight="normal" >instance_jvm_old_gc_count</text>
<rect x="9.3" y="333.0" width="236.8" height="14.0" rx="1" fill="#f2f3f8"/>
<text transform="translate(14.30 340.30) scale(0.9 1)" font-size="7.500" fill="#8f95a1" text-anchor="start" dominant-baseline="central" font-weight="normal" >JVM Thread Count (Java Service)</text>
<rect x="234.70" y="339.20" width="1.3" height="1.3" fill="#9da2ab"/>
<rect x="236.75" y="339.20" width="1.3" height="1.3" fill="#9da2ab"/>
<rect x="238.80" y="339.20" width="1.3" height="1.3" fill="#9da2ab"/>
<line x1="28.20" y1="442.90" x2="235.50" y2="442.90" stroke="#edeff2" stroke-width="0.8" stroke-dasharray="1.7 1.3"/>
<text transform="translate(24.40 443.25) scale(0.9 1)" font-size="6.222" fill="#939aa4" text-anchor="end" dominant-baseline="central" font-weight="normal" >0</text>
<line x1="28.20" y1="429.90" x2="235.50" y2="429.90" stroke="#edeff2" stroke-width="0.8" stroke-dasharray="1.7 1.3"/>
<text transform="translate(24.40 430.25) scale(0.9 1)" font-size="6.222" fill="#939aa4" text-anchor="end" dominant-baseline="central" font-weight="normal" >20</text>
<line x1="28.20" y1="416.90" x2="235.50" y2="416.90" stroke="#edeff2" stroke-width="0.8" stroke-dasharray="1.7 1.3"/>
<text transform="translate(24.40 417.25) scale(0.9 1)" font-size="6.222" fill="#939aa4" text-anchor="end" dominant-baseline="central" font-weight="normal" >40</text>
<line x1="28.20" y1="403.90" x2="235.50" y2="403.90" stroke="#edeff2" stroke-width="0.8" stroke-dasharray="1.7 1.3"/>
<text transform="translate(24.40 404.25) scale(0.9 1)" font-size="6.222" fill="#939aa4" text-anchor="end" dominant-baseline="central" font-weight="normal" >60</text>
<line x1="28.20" y1="390.90" x2="235.50" y2="390.90" stroke="#edeff2" stroke-width="0.8" stroke-dasharray="1.7 1.3"/>
<text transform="translate(24.40 391.25) scale(0.9 1)" font-size="6.222" fill="#939aa4" text-anchor="end" dominant-baseline="central" font-weight="normal" >80</text>
<line x1="28.20" y1="377.90" x2="235.50" y2="377.90" stroke="#edeff2" stroke-width="0.8" stroke-dasharray="1.7 1.3"/>
<text transform="translate(24.40 378.25) scale(0.9 1)" font-size="6.222" fill="#939aa4" text-anchor="end" dominant-baseline="central" font-weight="normal" >100</text>
<clipPath id="c11"><rect x="9.3" y="444.0" width="231.30" height="12"/></clipPath>
<g clip-path="url(#c11)">
<text transform="translate(32.35 450.00) scale(0.9 1)" font-size="6.667" fill="#979ca6" text-anchor="middle" dominant-baseline="central" font-weight="normal" >04-17 09</text>
<text transform="translate(65.51 450.00) scale(0.9 1)" font-size="6.667" fill="#979ca6" text-anchor="middle" dominant-baseline="central" font-weight="normal" >04-17 13</text>
<text transform="translate(98.68 450.00) scale(0.9 1)" font-size="6.667" fill="#979ca6" text-anchor="middle" dominant-baseline="central" font-weight="normal" >04-17 17</text>
<text transform="translate(131.85 450.00) scale(0.9 1)" font-size="6.667" fill="#979ca6" text-anchor="middle" dominant-baseline="central" font-weight="normal" >04-17 21</text>
<text transform="translate(165.02 450.00) scale(0.9 1)" font-size="6.667" fill="#979ca6" text-anchor="middle" dominant-baseline="central" font-weight="normal" >04-18 01</text>
<text transform="translate(198.19 450.00) scale(0.9 1)" font-size="6.667" fill="#979ca6" text-anchor="middle" dominant-baseline="central" font-weight="normal" >04-18 05</text>
<text transform="translate(231.35 450.00) scale(0.9 1)" font-size="6.667" fill="#979ca6" text-anchor="middle" dominant-baseline="central" font-weight="normal" >04-18 09</text>
</g>
<line x1="32.35" y1="442.90" x2="32.35" y2="444.50" stroke="#e2e4ea" stroke-width="0.6"/>
<line x1="65.51" y1="442.90" x2="65.51" y2="444.50" stroke="#e2e4ea" stroke-width="0.6"/>
<line x1="98.68" y1="442.90" x2="98.68" y2="444.50" stroke="#e2e4ea" stroke-width="0.6"/>
<line x1="131.85" y1="442.90" x2="131.85" y2="444.50" stroke="#e2e4ea" stroke-width="0.6"/>
<line x1="165.02" y1="442.90" x2="165.02" y2="444.50" stroke="#e2e4ea" stroke-width="0.6"/>
<line x1="198.19" y1="442.90" x2="198.19" y2="444.50" stroke="#e2e4ea" stroke-width="0.6"/>
<line x1="231.35" y1="442.90" x2="231.35" y2="444.50" stroke="#e2e4ea" stroke-width="0.6"/>
<polyline points="32.35,377.90 40.64,377.90 48.93,377.90 57.22,377.90 65.51,377.90 73.81,377.90 82.10,377.90 90.39,377.90 98.68,377.90 106.97,377.90 115.27,377.90 123.56,377.90 131.85,377.90 140.14,377.90 148.43,377.90 156.73,377.90 165.02,377.90 173.31,377.90 181.60,377.90 189.89,377.90 198.19,377.90 206.48,377.90 214.77,377.90 223.06,377.90 231.35,377.90" fill="none" stroke="#ffd47e" stroke-width="1.2" stroke-linejoin="round"/>
<polyline points="32.35,398.70 40.64,398.70 48.93,398.70 57.22,398.70 65.51,398.70 73.81,398.70 82.10,398.70 90.39,398.70 98.68,398.70 106.97,398.70 115.27,398.70 123.56,398.70 131.85,398.70 140.14,398.70 148.43,398.70 156.73,398.70 165.02,398.70 173.31,398.70 181.60,398.70 189.89,398.70 198.19,398.70 206.48,398.70 214.77,398.70 223.06,398.70 231.35,398.70" fill="none" stroke="#55adee" stroke-width="1.4" stroke-linejoin="round"/>
<polyline points="32.35,403.25 40.64,403.25 48.93,403.25 57.22,403.25 65.51,403.25 73.81,403.25 82.10,403.25 90.39,403.25 98.68,403.25 106.97,403.25 115.27,403.25 123.56,403.25 131.85,403.25 140.14,403.25 148.43,403.25 156.73,403.25 165.02,403.25 173.31,403.25 181.60,403.25 189.89,403.25 198.19,403.25 206.48,403.25 214.77,403.25 223.06,403.25 231.35,403.25" fill="none" stroke="#5fc6c4" stroke-width="1.4" stroke-linejoin="round"/>
<clipPath id="c12"><rect x="9.3" y="350.5" width="196.30" height="12"/></clipPath>
<g clip-path="url(#c12)">
<circle cx="19.90" cy="356.80" r="3.05" fill="#3aa0ea"/>
<text transform="translate(25.50 357.15) scale(0.9 1)" font-size="7.000" fill="#464c56" text-anchor="start" dominant-baseline="central" font-weight="normal" >instance_jvm_thread_live_count</text>
<circle cx="123.70" cy="356.80" r="3.05" fill="#3cbfbd"/>
<text transform="translate(129.30 357.15) scale(0.9 1)" font-size="7.000" fill="#464c56" text-anchor="start" dominant-baseline="central" font-weight="normal" >instance_jvm_thread_daemon_count</text>
</g>
<path d="M215.10 353.30 L210.10 356.60 L215.10 359.90 z" fill="#b0b5bd"/>
<text transform="translate(220.10 356.55) scale(0.9 1)" font-size="7.667" fill="#4a505a" text-anchor="start" dominant-baseline="central" font-weight="normal" >1/3</text>
<path d="M234.20 353.30 L239.20 356.60 L234.20 359.90 z" fill="#2b3e4e"/>
<rect x="251.2" y="333.0" width="237.4" height="14.0" rx="1" fill="#f2f3f8"/>
<text transform="translate(256.20 340.30) scale(0.9 1)" font-size="7.500" fill="#8f95a1" text-anchor="start" dominant-baseline="central" font-weight="normal" >JVM Thread State Count (Java Service)</text>
<rect x="477.20" y="339.20" width="1.3" height="1.3" fill="#9da2ab"/>
<rect x="479.25" y="339.20" width="1.3" height="1.3" fill="#9da2ab"/>
<rect x="481.30" y="339.20" width="1.3" height="1.3" fill="#9da2ab"/>
<line x1="266.80" y1="442.60" x2="478.80" y2="442.60" stroke="#edeff2" stroke-width="0.8" stroke-dasharray="1.7 1.3"/>
<text transform="translate(263.00 442.95) scale(0.9 1)" font-size="6.222" fill="#939aa4" text-anchor="end" dominant-baseline="central" font-weight="normal" >0</text>
<line x1="266.80" y1="432.29" x2="478.80" y2="432.29" stroke="#edeff2" stroke-width="0.8" stroke-dasharray="1.7 1.3"/>
<text transform="translate(263.00 432.64) scale(0.9 1)" font-size="6.222" fill="#939aa4" text-anchor="end" dominant-baseline="central" font-weight="normal" >10</text>
<line x1="266.80" y1="421.97" x2="478.80" y2="421.97" stroke="#edeff2" stroke-width="0.8" stroke-dasharray="1.7 1.3"/>
<text transform="translate(263.00 422.32) scale(0.9 1)" font-size="6.222" fill="#939aa4" text-anchor="end" dominant-baseline="central" font-weight="normal" >20</text>
<line x1="266.80" y1="411.66" x2="478.80" y2="411.66" stroke="#edeff2" stroke-width="0.8" stroke-dasharray="1.7 1.3"/>
<text transform="translate(263.00 412.01) scale(0.9 1)" font-size="6.222" fill="#939aa4" text-anchor="end" dominant-baseline="central" font-weight="normal" >30</text>
<line x1="266.80" y1="401.34" x2="478.80" y2="401.34" stroke="#edeff2" stroke-width="0.8" stroke-dasharray="1.7 1.3"/>
<text transform="translate(263.00 401.69) scale(0.9 1)" font-size="6.222" fill="#939aa4" text-anchor="end" dominant-baseline="central" font-weight="normal" >40</text>
<line x1="266.80" y1="391.03" x2="478.80" y2="391.03" stroke="#edeff2" stroke-width="0.8" stroke-dasharray="1.7 1.3"/>
<text transform="translate(263.00 391.38) scale(0.9 1)" font-size="6.222" fill="#939aa4" text-anchor="end" dominant-baseline="central" font-weight="normal" >50</text>
<line x1="266.80" y1="380.71" x2="478.80" y2="380.71" stroke="#edeff2" stroke-width="0.8" stroke-dasharray="1.7 1.3"/>
<text transform="translate(263.00 381.06) scale(0.9 1)" font-size="6.222" fill="#939aa4" text-anchor="end" dominant-baseline="central" font-weight="normal" >60</text>
<line x1="266.80" y1="370.40" x2="478.80" y2="370.40" stroke="#edeff2" stroke-width="0.8" stroke-dasharray="1.7 1.3"/>
<text transform="translate(263.00 370.75) scale(0.9 1)" font-size="6.222" fill="#939aa4" text-anchor="end" dominant-baseline="central" font-weight="normal" >70</text>
<clipPath id="c13"><rect x="251.2" y="444.0" width="231.30" height="12"/></clipPath>
<g clip-path="url(#c13)">
<text transform="translate(271.04 450.00) scale(0.9 1)" font-size="6.667" fill="#979ca6" text-anchor="middle" dominant-baseline="central" font-weight="normal" >04-17 09</text>
<text transform="translate(304.96 450.00) scale(0.9 1)" font-size="6.667" fill="#979ca6" text-anchor="middle" dominant-baseline="central" font-weight="normal" >04-17 13</text>
<text transform="translate(338.88 450.00) scale(0.9 1)" font-size="6.667" fill="#979ca6" text-anchor="middle" dominant-baseline="central" font-weight="normal" >04-17 17</text>
<text transform="translate(372.80 450.00) scale(0.9 1)" font-size="6.667" fill="#979ca6" text-anchor="middle" dominant-baseline="central" font-weight="normal" >04-17 21</text>
<text transform="translate(406.72 450.00) scale(0.9 1)" font-size="6.667" fill="#979ca6" text-anchor="middle" dominant-baseline="central" font-weight="normal" >04-18 01</text>
<text transform="translate(440.64 450.00) scale(0.9 1)" font-size="6.667" fill="#979ca6" text-anchor="middle" dominant-baseline="central" font-weight="normal" >04-18 05</text>
<text transform="translate(474.56 450.00) scale(0.9 1)" font-size="6.667" fill="#979ca6" text-anchor="middle" dominant-baseline="central" font-weight="normal" >04-18 09</text>
</g>
<line x1="271.04" y1="442.60" x2="271.04" y2="444.20" stroke="#e2e4ea" stroke-width="0.6"/>
<line x1="304.96" y1="442.60" x2="304.96" y2="444.20" stroke="#e2e4ea" stroke-width="0.6"/>
<line x1="338.88" y1="442.60" x2="338.88" y2="444.20" stroke="#e2e4ea" stroke-width="0.6"/>
<line x1="372.80" y1="442.60" x2="372.80" y2="444.20" stroke="#e2e4ea" stroke-width="0.6"/>
<line x1="406.72" y1="442.60" x2="406.72" y2="444.20" stroke="#e2e4ea" stroke-width="0.6"/>
<line x1="440.64" y1="442.60" x2="440.64" y2="444.20" stroke="#e2e4ea" stroke-width="0.6"/>
<line x1="474.56" y1="442.60" x2="474.56" y2="444.20" stroke="#e2e4ea" stroke-width="0.6"/>
<rect x="268.24" y="427.13" width="5.6" height="15.47" fill="#3aa0ea"/>
<rect x="268.24" y="401.34" width="5.6" height="25.79" fill="#ffc95c"/>
<rect x="268.24" y="373.49" width="5.6" height="27.85" fill="#fb6381"/>
<rect x="276.72" y="427.13" width="5.6" height="15.47" fill="#3aa0ea"/>
<rect x="276.72" y="401.34" width="5.6" height="25.79" fill="#ffc95c"/>
<rect x="276.72" y="373.49" width="5.6" height="27.85" fill="#fb6381"/>
<rect x="285.20" y="427.13" width="5.6" height="15.47" fill="#3aa0ea"/>
<rect x="285.20" y="401.34" width="5.6" height="25.79" fill="#ffc95c"/>
<rect x="285.20" y="373.49" width="5.6" height="27.85" fill="#fb6381"/>
<rect x="293.68" y="427.13" width="5.6" height="15.47" fill="#3aa0ea"/>
<rect x="293.68" y="401.34" width="5.6" height="25.79" fill="#ffc95c"/>
<rect x="293.68" y="373.49" width="5.6" height="27.85" fill="#fb6381"/>
<rect x="302.16" y="427.13" width="5.6" height="15.47" fill="#3aa0ea"/>
<rect x="302.16" y="401.34" width="5.6" height="25.79" fill="#ffc95c"/>
<rect x="302.16" y="373.49" width="5.6" height="27.85" fill="#fb6381"/>
<rect x="310.64" y="427.13" width="5.6" height="15.47" fill="#3aa0ea"/>
<rect x="310.64" y="401.34" width="5.6" height="25.79" fill="#ffc95c"/>
<rect x="310.64" y="373.49" width="5.6" height="27.85" fill="#fb6381"/>
<rect x="319.12" y="427.13" width="5.6" height="15.47" fill="#3aa0ea"/>
<rect x="319.12" y="401.34" width="5.6" height="25.79" fill="#ffc95c"/>
<rect x="319.12" y="373.49" width="5.6" height="27.85" fill="#fb6381"/>
<rect x="327.60" y="427.13" width="5.6" height="15.47" fill="#3aa0ea"/>
<rect x="327.60" y="401.34" width="5.6" height="25.79" fill="#ffc95c"/>
<rect x="327.60" y="373.49" width="5.6" height="27.85" fill="#fb6381"/>
<rect x="336.08" y="427.13" width="5.6" height="15.47" fill="#3aa0ea"/>
<rect x="336.08" y="401.34" width="5.6" height="25.79" fill="#ffc95c"/>
<rect x="336.08" y="373.49" width="5.6" height="27.85" fill="#fb6381"/>
<rect x="344.56" y="427.13" width="5.6" height="15.47" fill="#3aa0ea"/>
<rect x="344.56" y="401.34" width="5.6" height="25.79" fill="#ffc95c"/>
<rect x="344.56" y="373.49" width="5.6" height="27.85" fill="#fb6381"/>
<rect x="353.04" y="427.13" width="5.6" height="15.47" fill="#3aa0ea"/>
<rect x="353.04" y="401.34" width="5.6" height="25.79" fill="#ffc95c"/>
<rect x="353.04" y="373.49" width="5.6" height="27.85" fill="#fb6381"/>
<rect x="361.52" y="427.13" width="5.6" height="15.47" fill="#3aa0ea"/>
<rect x="361.52" y="401.34" width="5.6" height="25.79" fill="#ffc95c"/>
<rect x="361.52" y="373.49" width="5.6" height="27.85" fill="#fb6381"/>
<rect x="370.00" y="427.13" width="5.6" height="15.47" fill="#3aa0ea"/>
<rect x="370.00" y="401.34" width="5.6" height="25.79" fill="#ffc95c"/>
<rect x="370.00" y="373.49" width="5.6" height="27.85" fill="#fb6381"/>
<rect x="378.48" y="427.13" width="5.6" height="15.47" fill="#3aa0ea"/>
<rect x="378.48" y="401.34" width="5.6" height="25.79" fill="#ffc95c"/>
<rect x="378.48" y="373.49" width="5.6" height="27.85" fill="#fb6381"/>
<rect x="386.96" y="427.13" width="5.6" height="15.47" fill="#3aa0ea"/>
<rect x="386.96" y="401.34" width="5.6" height="25.79" fill="#ffc95c"/>
<rect x="386.96" y="373.49" width="5.6" height="27.85" fill="#fb6381"/>
<rect x="395.44" y="427.13" width="5.6" height="15.47" fill="#3aa0ea"/>
<rect x="395.44" y="401.34" width="5.6" height="25.79" fill="#ffc95c"/>
<rect x="395.44" y="373.49" width="5.6" height="27.85" fill="#fb6381"/>
<rect x="403.92" y="427.13" width="5.6" height="15.47" fill="#3aa0ea"/>
<rect x="403.92" y="401.34" width="5.6" height="25.79" fill="#ffc95c"/>
<rect x="403.92" y="373.49" width="5.6" height="27.85" fill="#fb6381"/>
<rect x="412.40" y="427.13" width="5.6" height="15.47" fill="#3aa0ea"/>
<rect x="412.40" y="401.34" width="5.6" height="25.79" fill="#ffc95c"/>
<rect x="412.40" y="373.49" width="5.6" height="27.85" fill="#fb6381"/>
<rect x="420.88" y="427.13" width="5.6" height="15.47" fill="#3aa0ea"/>
<rect x="420.88" y="401.34" width="5.6" height="25.79" fill="#ffc95c"/>
<rect x="420.88" y="373.49" width="5.6" height="27.85" fill="#fb6381"/>
<rect x="429.36" y="427.13" width="5.6" height="15.47" fill="#3aa0ea"/>
<rect x="429.36" y="401.34" width="5.6" height="25.79" fill="#ffc95c"/>
<rect x="429.36" y="373.49" width="5.6" height="27.85" fill="#fb6381"/>
<rect x="437.84" y="427.13" width="5.6" height="15.47" fill="#3aa0ea"/>
<rect x="437.84" y="401.34" width="5.6" height="25.79" fill="#ffc95c"/>
<rect x="437.84" y="373.49" width="5.6" height="27.85" fill="#fb6381"/>
<rect x="446.32" y="427.13" width="5.6" height="15.47" fill="#3aa0ea"/>
<rect x="446.32" y="401.34" width="5.6" height="25.79" fill="#ffc95c"/>
<rect x="446.32" y="373.49" width="5.6" height="27.85" fill="#fb6381"/>
<rect x="454.80" y="427.13" width="5.6" height="15.47" fill="#3aa0ea"/>
<rect x="454.80" y="401.34" width="5.6" height="25.79" fill="#ffc95c"/>
<rect x="454.80" y="373.49" width="5.6" height="27.85" fill="#fb6381"/>
<rect x="463.28" y="427.13" width="5.6" height="15.47" fill="#3aa0ea"/>
<rect x="463.28" y="401.34" width="5.6" height="25.79" fill="#ffc95c"/>
<rect x="463.28" y="373.49" width="5.6" height="27.85" fill="#fb6381"/>
<rect x="471.76" y="427.13" width="5.6" height="15.47" fill="#3aa0ea"/>
<rect x="471.76" y="401.34" width="5.6" height="25.79" fill="#ffc95c"/>
<rect x="471.76" y="373.49" width="5.6" height="27.85" fill="#fb6381"/>
<clipPath id="c14"><rect x="251.2" y="350.5" width="196.10" height="12"/></clipPath>
<g clip-path="url(#c14)">
<circle cx="261.90" cy="356.80" r="3.05" fill="#3aa0ea"/>
<text transform="translate(267.50 357.15) scale(0.9 1)" font-size="7.000" fill="#464c56" text-anchor="start" dominant-baseline="central" font-weight="normal" >instance_jvm_thread_runnable_state_thread_count</text>
<circle cx="420.00" cy="356.80" r="3.05" fill="#3cbfbd"/>
<text transform="translate(425.60 357.15) scale(0.9 1)" font-size="7.000" fill="#464c56" text-anchor="start" dominant-baseline="central" font-weight="normal" >instance_jvm_thread_blocked_state_thread_count</text>
</g>
<path d="M456.80 353.30 L451.80 356.60 L456.80 359.90 z" fill="#b0b5bd"/>
<text transform="translate(461.80 356.55) scale(0.9 1)" font-size="7.667" fill="#4a505a" text-anchor="start" dominant-baseline="central" font-weight="normal" >1/4</text>
<path d="M475.90 353.30 L480.90 356.60 L475.90 359.90 z" fill="#2b3e4e"/>
<rect x="493.8" y="333.0" width="236.9" height="14.0" rx="1" fill="#f2f3f8"/>
<text transform="translate(498.80 340.30) scale(0.9 1)" font-size="7.500" fill="#8f95a1" text-anchor="start" dominant-baseline="central" font-weight="normal" >JVM Class Count (Java Service)</text>
<rect x="719.30" y="339.20" width="1.3" height="1.3" fill="#9da2ab"/>
<rect x="721.35" y="339.20" width="1.3" height="1.3" fill="#9da2ab"/>
<rect x="723.40" y="339.20" width="1.3" height="1.3" fill="#9da2ab"/>
<line x1="523.30" y1="442.90" x2="720.60" y2="442.90" stroke="#edeff2" stroke-width="0.8" stroke-dasharray="1.7 1.3"/>
<text transform="translate(519.50 443.25) scale(0.9 1)" font-size="6.222" fill="#939aa4" text-anchor="end" dominant-baseline="central" font-weight="normal" >0</text>
<line x1="523.30" y1="433.63" x2="720.60" y2="433.63" stroke="#edeff2" stroke-width="0.8" stroke-dasharray="1.7 1.3"/>
<text transform="translate(519.50 433.98) scale(0.9 1)" font-size="6.222" fill="#939aa4" text-anchor="end" dominant-baseline="central" font-weight="normal" >30,000</text>
<line x1="523.30" y1="424.36" x2="720.60" y2="424.36" stroke="#edeff2" stroke-width="0.8" stroke-dasharray="1.7 1.3"/>
<text transform="translate(519.50 424.71) scale(0.9 1)" font-size="6.222" fill="#939aa4" text-anchor="end" dominant-baseline="central" font-weight="normal" >60,000</text>
<line x1="523.30" y1="415.09" x2="720.60" y2="415.09" stroke="#edeff2" stroke-width="0.8" stroke-dasharray="1.7 1.3"/>
<text transform="translate(519.50 415.44) scale(0.9 1)" font-size="6.222" fill="#939aa4" text-anchor="end" dominant-baseline="central" font-weight="normal" >90,000</text>
<line x1="523.30" y1="405.81" x2="720.60" y2="405.81" stroke="#edeff2" stroke-width="0.8" stroke-dasharray="1.7 1.3"/>
<text transform="translate(519.50 406.16) scale(0.9 1)" font-size="6.222" fill="#939aa4" text-anchor="end" dominant-baseline="central" font-weight="normal" >120,000</text>
<line x1="523.30" y1="396.54" x2="720.60" y2="396.54" stroke="#edeff2" stroke-width="0.8" stroke-dasharray="1.7 1.3"/>
<text transform="translate(519.50 396.89) scale(0.9 1)" font-size="6.222" fill="#939aa4" text-anchor="end" dominant-baseline="central" font-weight="normal" >150,000</text>
<line x1="523.30" y1="387.27" x2="720.60" y2="387.27" stroke="#edeff2" stroke-width="0.8" stroke-dasharray="1.7 1.3"/>
<text transform="translate(519.50 387.62) scale(0.9 1)" font-size="6.222" fill="#939aa4" text-anchor="end" dominant-baseline="central" font-weight="normal" >180,000</text>
<line x1="523.30" y1="378.00" x2="720.60" y2="378.00" stroke="#edeff2" stroke-width="0.8" stroke-dasharray="1.7 1.3"/>
<text transform="translate(519.50 378.35) scale(0.9 1)" font-size="6.222" fill="#939aa4" text-anchor="end" dominant-baseline="central" font-weight="normal" >210,000</text>
<clipPath id="c15"><rect x="493.8" y="444.0" width="231.30" height="12"/></clipPath>
<g clip-path="url(#c15)">
<text transform="translate(527.25 450.00) scale(0.9 1)" font-size="6.667" fill="#979ca6" text-anchor="middle" dominant-baseline="central" font-weight="normal" >04-17 09</text>
<text transform="translate(558.81 450.00) scale(0.9 1)" font-size="6.667" fill="#979ca6" text-anchor="middle" dominant-baseline="central" font-weight="normal" >04-17 13</text>
<text transform="translate(590.38 450.00) scale(0.9 1)" font-size="6.667" fill="#979ca6" text-anchor="middle" dominant-baseline="central" font-weight="normal" >04-17 17</text>
<text transform="translate(621.95 450.00) scale(0.9 1)" font-size="6.667" fill="#979ca6" text-anchor="middle" dominant-baseline="central" font-weight="normal" >04-17 21</text>
<text transform="translate(653.52 450.00) scale(0.9 1)" font-size="6.667" fill="#979ca6" text-anchor="middle" dominant-baseline="central" font-weight="normal" >04-18 01</text>
<text transform="translate(685.09 450.00) scale(0.9 1)" font-size="6.667" fill="#979ca6" text-anchor="middle" dominant-baseline="central" font-weight="normal" >04-18 05</text>
<text transform="translate(716.65 450.00) scale(0.9 1)" font-size="6.667" fill="#979ca6" text-anchor="middle" dominant-baseline="central" font-weight="normal" >04-18 09</text>
</g>
<line x1="527.25" y1="442.90" x2="527.25" y2="444.50" stroke="#e2e4ea" stroke-width="0.6"/>
<line x1="558.81" y1="442.90" x2="558.81" y2="444.50" stroke="#e2e4ea" stroke-width="0.6"/>
<line x1="590.38" y1="442.90" x2="590.38" y2="444.50" stroke="#e2e4ea" stroke-width="0.6"/>
<line x1="621.95" y1="442.90" x2="621.95" y2="444.50" stroke="#e2e4ea" stroke-width="0.6"/>
<line x1="653.52" y1="442.90" x2="653.52" y2="444.50" stroke="#e2e4ea" stroke-width="0.6"/>
<line x1="685.09" y1="442.90" x2="685.09" y2="444.50" stroke="#e2e4ea" stroke-width="0.6"/>
<line x1="716.65" y1="442.90" x2="716.65" y2="444.50" stroke="#e2e4ea" stroke-width="0.6"/>
<path d="M527.25 383.81 L716.65 382.91 L716.65 395.21 L527.25 395.62 Z" fill="#ffe9b8"/>
<path d="M527.25 395.62 L716.65 395.21 L716.65 431.37 L527.25 431.37 Z" fill="#d3dbab"/>
<path d="M527.25 431.37 L716.65 431.37 L716.65 442.90 L527.25 442.90 Z" fill="#b5cea7"/>
<line x1="527.25" y1="383.81" x2="716.65" y2="382.91" stroke="#ffcd62" stroke-width="1.1"/>
<line x1="527.25" y1="395.62" x2="716.65" y2="395.21" stroke="#6cc4b6" stroke-width="1.1"/>
<line x1="527.25" y1="431.37" x2="716.65" y2="431.37" stroke="#4aa4d2" stroke-width="1.3"/>
<clipPath id="c16"><rect x="493.8" y="350.5" width="196.00" height="12"/></clipPath>
<g clip-path="url(#c16)">
<circle cx="504.30" cy="356.80" r="3.05" fill="#3aa0ea"/>
<text transform="translate(509.90 357.15) scale(0.9 1)" font-size="7.000" fill="#464c56" text-anchor="start" dominant-baseline="central" font-weight="normal" >instance_jvm_class_loaded_class_count</text>
<circle cx="629.10" cy="356.80" r="3.05" fill="#3cbfbd"/>
<text transform="translate(634.70 357.15) scale(0.9 1)" font-size="7.000" fill="#464c56" text-anchor="start" dominant-baseline="central" font-weight="normal" >instance_jvm_class_total_unloaded_class_count</text>
</g>
<path d="M699.30 353.30 L694.30 356.60 L699.30 359.90 z" fill="#b0b5bd"/>
<text transform="translate(704.30 356.55) scale(0.9 1)" font-size="7.667" fill="#4a505a" text-anchor="start" dominant-baseline="central" font-weight="normal" >1/3</text>
<path d="M718.40 353.30 L723.40 356.60 L718.40 359.90 z" fill="#2b3e4e"/>
<rect x="735.9" y="333.0" width="236.8" height="14.0" rx="1" fill="#f2f3f8"/>
<text transform="translate(740.90 340.30) scale(0.9 1)" font-size="7.500" fill="#8f95a1" text-anchor="start" dominant-baseline="central" font-weight="normal" >CLR CPU (.NET Service) ( % )</text>
<rect x="961.30" y="339.20" width="1.3" height="1.3" fill="#9da2ab"/>
<rect x="963.35" y="339.20" width="1.3" height="1.3" fill="#9da2ab"/>
<rect x="965.40" y="339.20" width="1.3" height="1.3" fill="#9da2ab"/>
<rect x="9.3" y="458.5" width="236.8" height="14.0" rx="1" fill="#f2f3f8"/>
<text transform="translate(14.30 465.80) scale(0.9 1)" font-size="7.500" fill="#8f95a1" text-anchor="start" dominant-baseline="central" font-weight="normal" >CLR GC (.NET Service)</text>
<rect x="234.70" y="464.70" width="1.3" height="1.3" fill="#9da2ab"/>
<rect x="236.75" y="464.70" width="1.3" height="1.3" fill="#9da2ab"/>
<rect x="238.80" y="464.70" width="1.3" height="1.3" fill="#9da2ab"/>
<rect x="251.2" y="458.5" width="237.4" height="14.0" rx="1" fill="#f2f3f8"/>
<text transform="translate(256.20 465.80) scale(0.9 1)" font-size="7.500" fill="#8f95a1" text-anchor="start" dominant-baseline="central" font-weight="normal" >CLR Heap Memory (.NET Service) ( MB )</text>
<rect x="477.20" y="464.70" width="1.3" height="1.3" fill="#9da2ab"/>
<rect x="479.25" y="464.70" width="1.3" height="1.3" fill="#9da2ab"/>
<rect x="481.30" y="464.70" width="1.3" height="1.3" fill="#9da2ab"/>
<rect x="493.8" y="458.5" width="236.9" height="14.0" rx="1" fill="#f2f3f8"/>
<text transform="translate(498.80 465.80) scale(0.9 1)" font-size="7.500" fill="#8f95a1" text-anchor="start" dominant-baseline="central" font-weight="normal" >CLR Thread (.NET Service)</text>
<rect x="719.30" y="464.70" width="1.3" height="1.3" fill="#9da2ab"/>
<rect x="721.35" y="464.70" width="1.3" height="1.3" fill="#9da2ab"/>
<rect x="723.40" y="464.70" width="1.3" height="1.3" fill="#9da2ab"/>
<rect x="0" y="501.6" width="981" height="2.4" fill="#f3f4f7"/>
</svg></body></html>
